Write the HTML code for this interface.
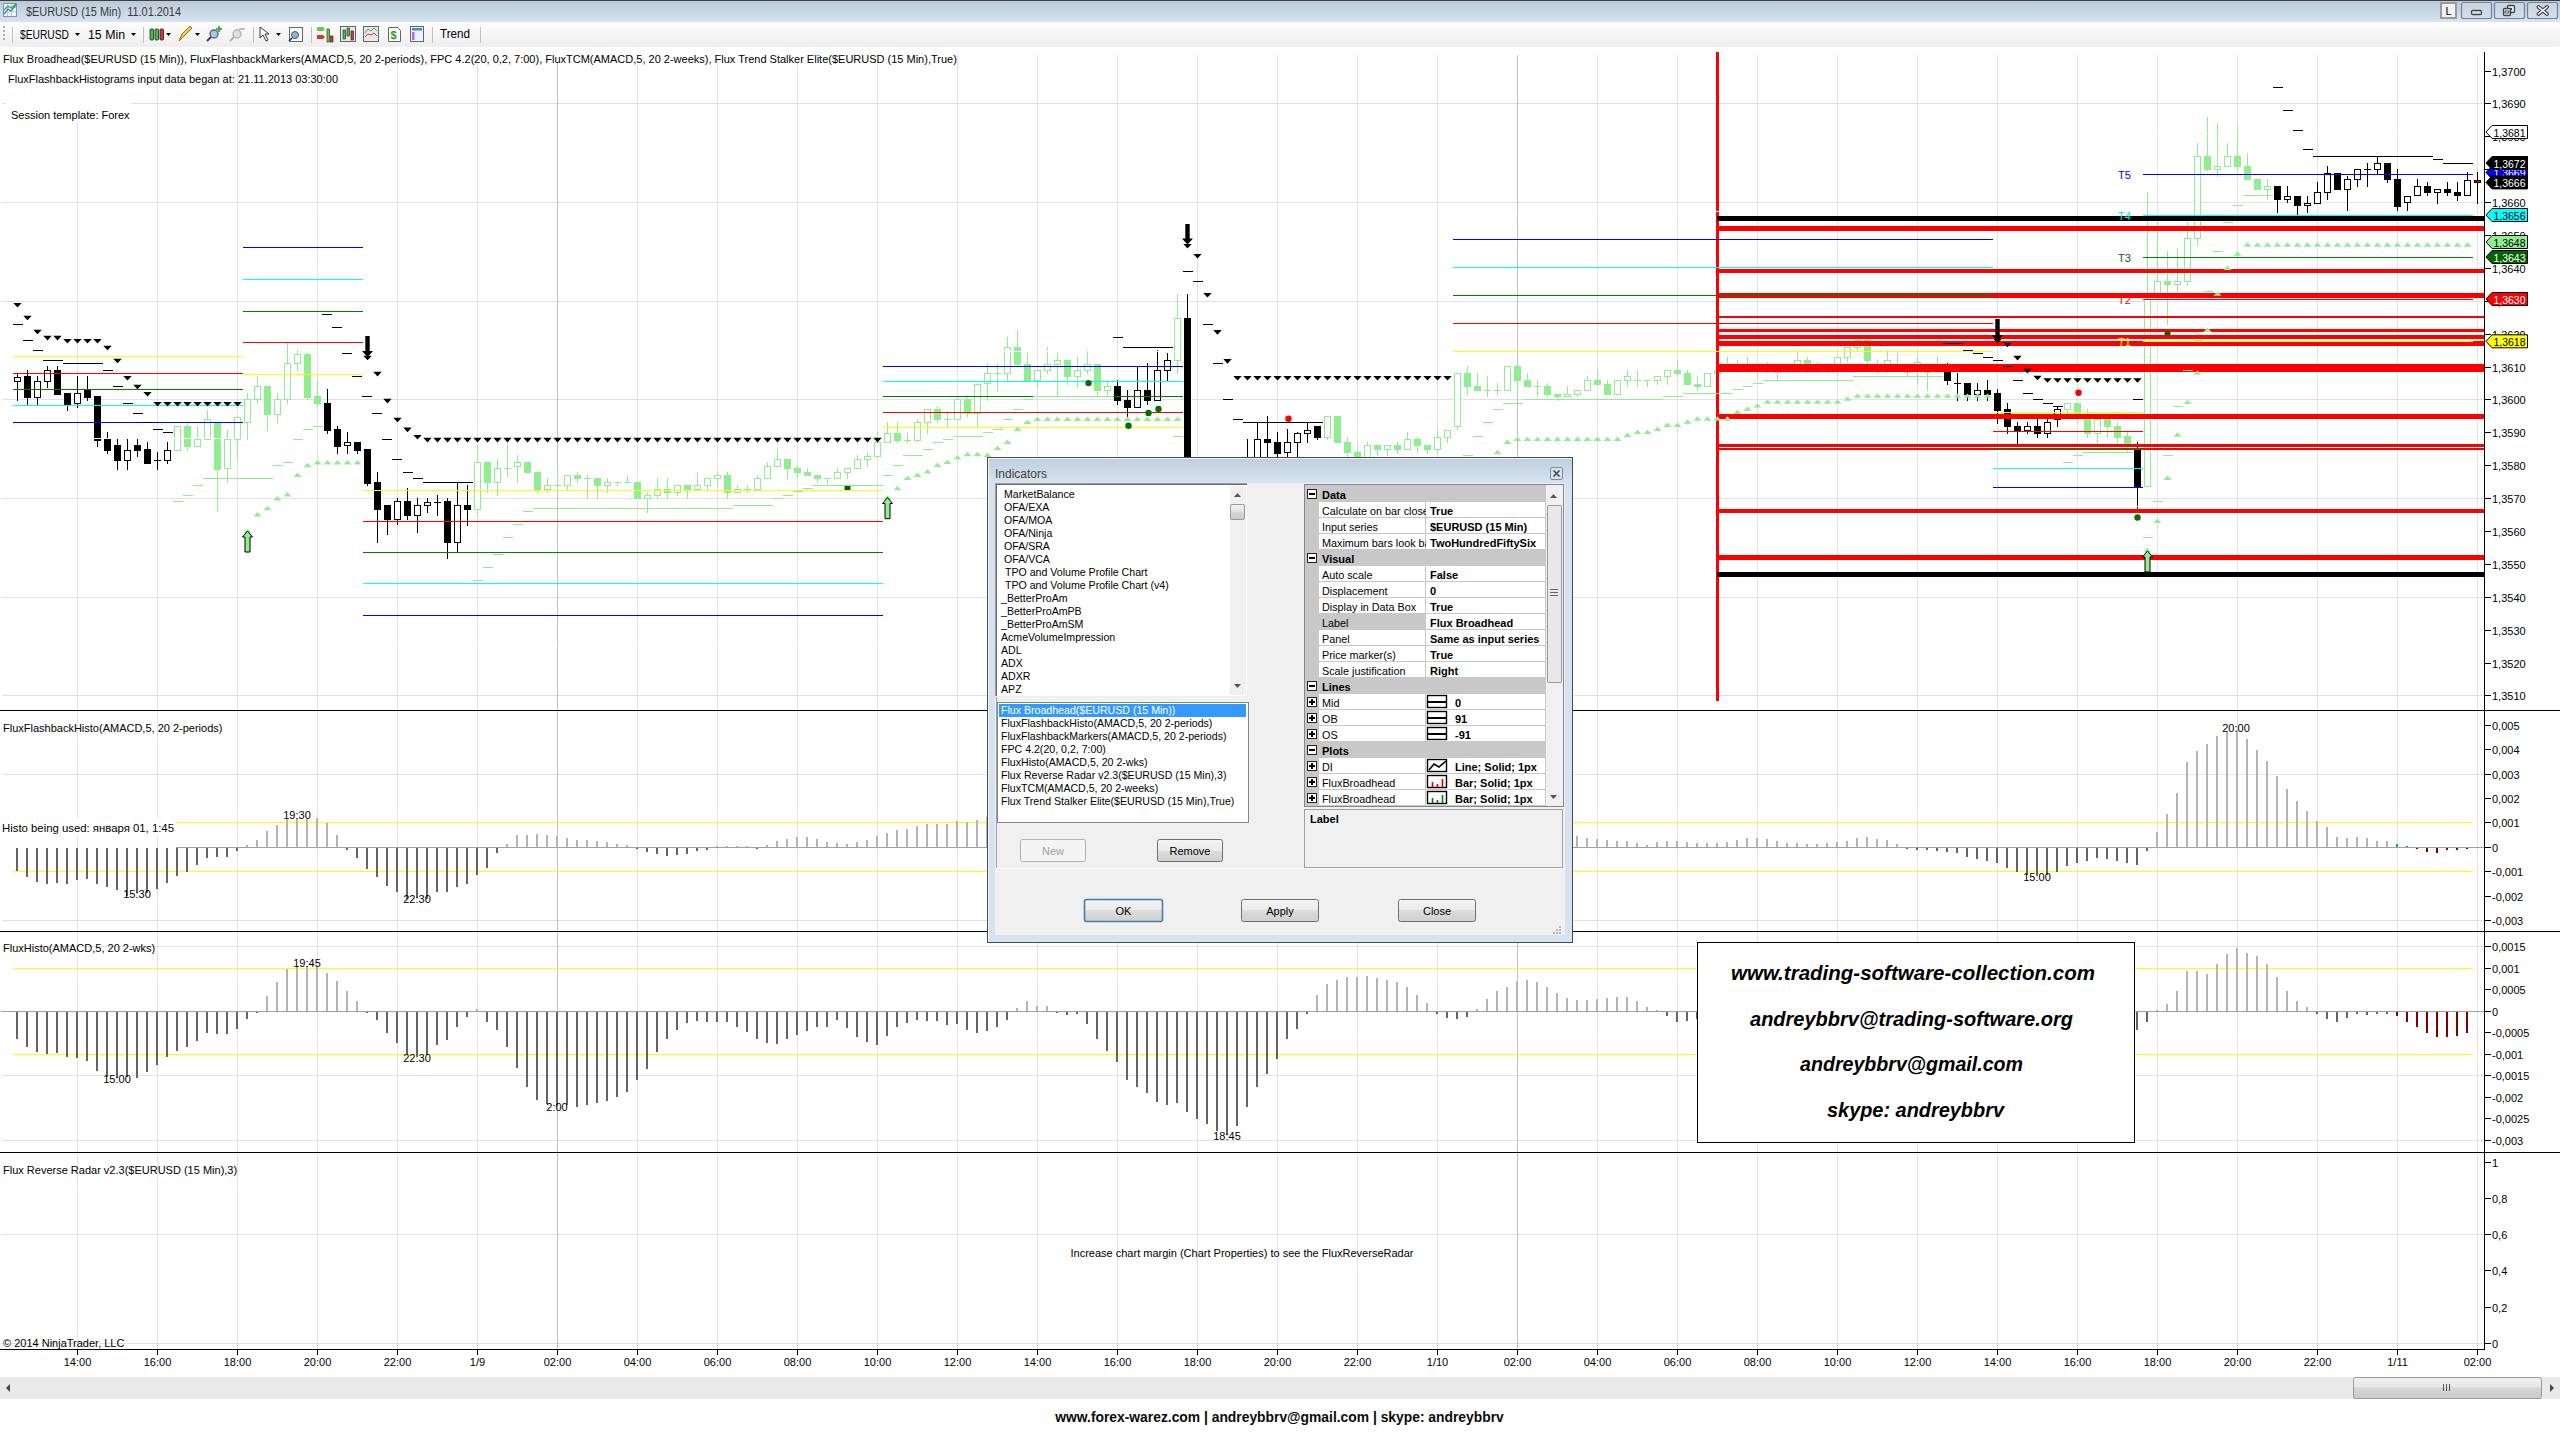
<!DOCTYPE html><html><head><meta charset="utf-8"><title>NinjaTrader chart</title><style>html,body{margin:0;padding:0;background:#fff;width:2560px;height:1434px;overflow:hidden;position:relative}</style></head><body><svg width="2560" height="1434" viewBox="0 0 2560 1434" style="position:absolute;left:0;top:0" font-family="Liberation Sans, sans-serif">
<rect x="0" y="0" width="2560" height="1434" fill="#fff"/>
<g shape-rendering="crispEdges">
<rect x="2" y="103" width="2482" height="1" fill="#e2e2e2"/>
<rect x="2" y="202" width="2482" height="1" fill="#e2e2e2"/>
<rect x="2" y="301" width="2482" height="1" fill="#e2e2e2"/>
<rect x="2" y="399" width="2482" height="1" fill="#e2e2e2"/>
<rect x="2" y="498" width="2482" height="1" fill="#e2e2e2"/>
<rect x="2" y="597" width="2482" height="1" fill="#e2e2e2"/>
<rect x="2" y="695" width="2482" height="1" fill="#e2e2e2"/>
<rect x="2" y="774" width="2482" height="1" fill="#e2e2e2"/>
<rect x="2" y="920" width="2482" height="1" fill="#e2e2e2"/>
<rect x="2" y="946" width="2482" height="1" fill="#e2e2e2"/>
<rect x="2" y="1075" width="2482" height="1" fill="#e2e2e2"/>
<rect x="2" y="1140" width="2482" height="1" fill="#e2e2e2"/>
<rect x="2" y="1234" width="2482" height="1" fill="#e2e2e2"/>
<rect x="2" y="1343" width="2482" height="1" fill="#e2e2e2"/>
<rect x="77" y="55" width="1" height="655" fill="#e2e2e2"/>
<rect x="77" y="711" width="1" height="220" fill="#e2e2e2"/>
<rect x="77" y="932" width="1" height="220" fill="#e2e2e2"/>
<rect x="77" y="1153" width="1" height="196" fill="#e2e2e2"/>
<rect x="157" y="55" width="1" height="655" fill="#e2e2e2"/>
<rect x="157" y="711" width="1" height="220" fill="#e2e2e2"/>
<rect x="157" y="932" width="1" height="220" fill="#e2e2e2"/>
<rect x="157" y="1153" width="1" height="196" fill="#e2e2e2"/>
<rect x="237" y="55" width="1" height="655" fill="#e2e2e2"/>
<rect x="237" y="711" width="1" height="220" fill="#e2e2e2"/>
<rect x="237" y="932" width="1" height="220" fill="#e2e2e2"/>
<rect x="237" y="1153" width="1" height="196" fill="#e2e2e2"/>
<rect x="317" y="55" width="1" height="655" fill="#e2e2e2"/>
<rect x="317" y="711" width="1" height="220" fill="#e2e2e2"/>
<rect x="317" y="932" width="1" height="220" fill="#e2e2e2"/>
<rect x="317" y="1153" width="1" height="196" fill="#e2e2e2"/>
<rect x="397" y="55" width="1" height="655" fill="#e2e2e2"/>
<rect x="397" y="711" width="1" height="220" fill="#e2e2e2"/>
<rect x="397" y="932" width="1" height="220" fill="#e2e2e2"/>
<rect x="397" y="1153" width="1" height="196" fill="#e2e2e2"/>
<rect x="477" y="55" width="1" height="655" fill="#e2e2e2"/>
<rect x="477" y="711" width="1" height="220" fill="#e2e2e2"/>
<rect x="477" y="932" width="1" height="220" fill="#e2e2e2"/>
<rect x="477" y="1153" width="1" height="196" fill="#e2e2e2"/>
<rect x="557" y="55" width="1" height="655" fill="#c0c0c0"/>
<rect x="557" y="711" width="1" height="220" fill="#c0c0c0"/>
<rect x="557" y="932" width="1" height="220" fill="#c0c0c0"/>
<rect x="557" y="1153" width="1" height="196" fill="#c0c0c0"/>
<rect x="637" y="55" width="1" height="655" fill="#e2e2e2"/>
<rect x="637" y="711" width="1" height="220" fill="#e2e2e2"/>
<rect x="637" y="932" width="1" height="220" fill="#e2e2e2"/>
<rect x="637" y="1153" width="1" height="196" fill="#e2e2e2"/>
<rect x="717" y="55" width="1" height="655" fill="#e2e2e2"/>
<rect x="717" y="711" width="1" height="220" fill="#e2e2e2"/>
<rect x="717" y="932" width="1" height="220" fill="#e2e2e2"/>
<rect x="717" y="1153" width="1" height="196" fill="#e2e2e2"/>
<rect x="797" y="55" width="1" height="655" fill="#e2e2e2"/>
<rect x="797" y="711" width="1" height="220" fill="#e2e2e2"/>
<rect x="797" y="932" width="1" height="220" fill="#e2e2e2"/>
<rect x="797" y="1153" width="1" height="196" fill="#e2e2e2"/>
<rect x="877" y="55" width="1" height="655" fill="#e2e2e2"/>
<rect x="877" y="711" width="1" height="220" fill="#e2e2e2"/>
<rect x="877" y="932" width="1" height="220" fill="#e2e2e2"/>
<rect x="877" y="1153" width="1" height="196" fill="#e2e2e2"/>
<rect x="957" y="55" width="1" height="655" fill="#e2e2e2"/>
<rect x="957" y="711" width="1" height="220" fill="#e2e2e2"/>
<rect x="957" y="932" width="1" height="220" fill="#e2e2e2"/>
<rect x="957" y="1153" width="1" height="196" fill="#e2e2e2"/>
<rect x="1037" y="55" width="1" height="655" fill="#e2e2e2"/>
<rect x="1037" y="711" width="1" height="220" fill="#e2e2e2"/>
<rect x="1037" y="932" width="1" height="220" fill="#e2e2e2"/>
<rect x="1037" y="1153" width="1" height="196" fill="#e2e2e2"/>
<rect x="1117" y="55" width="1" height="655" fill="#e2e2e2"/>
<rect x="1117" y="711" width="1" height="220" fill="#e2e2e2"/>
<rect x="1117" y="932" width="1" height="220" fill="#e2e2e2"/>
<rect x="1117" y="1153" width="1" height="196" fill="#e2e2e2"/>
<rect x="1197" y="55" width="1" height="655" fill="#e2e2e2"/>
<rect x="1197" y="711" width="1" height="220" fill="#e2e2e2"/>
<rect x="1197" y="932" width="1" height="220" fill="#e2e2e2"/>
<rect x="1197" y="1153" width="1" height="196" fill="#e2e2e2"/>
<rect x="1277" y="55" width="1" height="655" fill="#e2e2e2"/>
<rect x="1277" y="711" width="1" height="220" fill="#e2e2e2"/>
<rect x="1277" y="932" width="1" height="220" fill="#e2e2e2"/>
<rect x="1277" y="1153" width="1" height="196" fill="#e2e2e2"/>
<rect x="1357" y="55" width="1" height="655" fill="#e2e2e2"/>
<rect x="1357" y="711" width="1" height="220" fill="#e2e2e2"/>
<rect x="1357" y="932" width="1" height="220" fill="#e2e2e2"/>
<rect x="1357" y="1153" width="1" height="196" fill="#e2e2e2"/>
<rect x="1437" y="55" width="1" height="655" fill="#e2e2e2"/>
<rect x="1437" y="711" width="1" height="220" fill="#e2e2e2"/>
<rect x="1437" y="932" width="1" height="220" fill="#e2e2e2"/>
<rect x="1437" y="1153" width="1" height="196" fill="#e2e2e2"/>
<rect x="1517" y="55" width="1" height="655" fill="#c0c0c0"/>
<rect x="1517" y="711" width="1" height="220" fill="#c0c0c0"/>
<rect x="1517" y="932" width="1" height="220" fill="#c0c0c0"/>
<rect x="1517" y="1153" width="1" height="196" fill="#c0c0c0"/>
<rect x="1597" y="55" width="1" height="655" fill="#e2e2e2"/>
<rect x="1597" y="711" width="1" height="220" fill="#e2e2e2"/>
<rect x="1597" y="932" width="1" height="220" fill="#e2e2e2"/>
<rect x="1597" y="1153" width="1" height="196" fill="#e2e2e2"/>
<rect x="1677" y="55" width="1" height="655" fill="#e2e2e2"/>
<rect x="1677" y="711" width="1" height="220" fill="#e2e2e2"/>
<rect x="1677" y="932" width="1" height="220" fill="#e2e2e2"/>
<rect x="1677" y="1153" width="1" height="196" fill="#e2e2e2"/>
<rect x="1757" y="55" width="1" height="655" fill="#e2e2e2"/>
<rect x="1757" y="711" width="1" height="220" fill="#e2e2e2"/>
<rect x="1757" y="932" width="1" height="220" fill="#e2e2e2"/>
<rect x="1757" y="1153" width="1" height="196" fill="#e2e2e2"/>
<rect x="1837" y="55" width="1" height="655" fill="#e2e2e2"/>
<rect x="1837" y="711" width="1" height="220" fill="#e2e2e2"/>
<rect x="1837" y="932" width="1" height="220" fill="#e2e2e2"/>
<rect x="1837" y="1153" width="1" height="196" fill="#e2e2e2"/>
<rect x="1917" y="55" width="1" height="655" fill="#e2e2e2"/>
<rect x="1917" y="711" width="1" height="220" fill="#e2e2e2"/>
<rect x="1917" y="932" width="1" height="220" fill="#e2e2e2"/>
<rect x="1917" y="1153" width="1" height="196" fill="#e2e2e2"/>
<rect x="1997" y="55" width="1" height="655" fill="#e2e2e2"/>
<rect x="1997" y="711" width="1" height="220" fill="#e2e2e2"/>
<rect x="1997" y="932" width="1" height="220" fill="#e2e2e2"/>
<rect x="1997" y="1153" width="1" height="196" fill="#e2e2e2"/>
<rect x="2077" y="55" width="1" height="655" fill="#e2e2e2"/>
<rect x="2077" y="711" width="1" height="220" fill="#e2e2e2"/>
<rect x="2077" y="932" width="1" height="220" fill="#e2e2e2"/>
<rect x="2077" y="1153" width="1" height="196" fill="#e2e2e2"/>
<rect x="2157" y="55" width="1" height="655" fill="#e2e2e2"/>
<rect x="2157" y="711" width="1" height="220" fill="#e2e2e2"/>
<rect x="2157" y="932" width="1" height="220" fill="#e2e2e2"/>
<rect x="2157" y="1153" width="1" height="196" fill="#e2e2e2"/>
<rect x="2237" y="55" width="1" height="655" fill="#e2e2e2"/>
<rect x="2237" y="711" width="1" height="220" fill="#e2e2e2"/>
<rect x="2237" y="932" width="1" height="220" fill="#e2e2e2"/>
<rect x="2237" y="1153" width="1" height="196" fill="#e2e2e2"/>
<rect x="2317" y="55" width="1" height="655" fill="#e2e2e2"/>
<rect x="2317" y="711" width="1" height="220" fill="#e2e2e2"/>
<rect x="2317" y="932" width="1" height="220" fill="#e2e2e2"/>
<rect x="2317" y="1153" width="1" height="196" fill="#e2e2e2"/>
<rect x="2397" y="55" width="1" height="655" fill="#e2e2e2"/>
<rect x="2397" y="711" width="1" height="220" fill="#e2e2e2"/>
<rect x="2397" y="932" width="1" height="220" fill="#e2e2e2"/>
<rect x="2397" y="1153" width="1" height="196" fill="#e2e2e2"/>
<rect x="2477" y="55" width="1" height="655" fill="#e2e2e2"/>
<rect x="2477" y="711" width="1" height="220" fill="#e2e2e2"/>
<rect x="2477" y="932" width="1" height="220" fill="#e2e2e2"/>
<rect x="2477" y="1153" width="1" height="196" fill="#e2e2e2"/>
</g>
<g shape-rendering="crispEdges">
<rect x="175" y="822" width="2298" height="1" fill="#ffff00"/>
<rect x="13" y="871" width="2460" height="1" fill="#ffff00"/>
<rect x="13" y="968" width="2460" height="1" fill="#ffff00"/>
<rect x="13" y="1054" width="2460" height="1" fill="#ffff00"/>
<rect x="176" y="847" width="2308" height="1" fill="#a0a0a0"/>
<rect x="1" y="1011" width="2483" height="1" fill="#a0a0a0"/>
<rect x="16" y="848" width="2" height="23" fill="#646464"/>
<rect x="26" y="848" width="2" height="29" fill="#646464"/>
<rect x="36" y="848" width="2" height="34" fill="#646464"/>
<rect x="46" y="848" width="2" height="36" fill="#646464"/>
<rect x="56" y="848" width="2" height="35" fill="#646464"/>
<rect x="66" y="848" width="2" height="36" fill="#646464"/>
<rect x="76" y="848" width="2" height="32" fill="#646464"/>
<rect x="86" y="848" width="2" height="31" fill="#646464"/>
<rect x="96" y="848" width="2" height="36" fill="#646464"/>
<rect x="106" y="848" width="2" height="39" fill="#646464"/>
<rect x="116" y="848" width="2" height="42" fill="#646464"/>
<rect x="126" y="848" width="2" height="48" fill="#646464"/>
<rect x="136" y="848" width="2" height="45" fill="#646464"/>
<rect x="146" y="848" width="2" height="45" fill="#646464"/>
<rect x="156" y="848" width="2" height="41" fill="#646464"/>
<rect x="166" y="848" width="2" height="35" fill="#646464"/>
<rect x="176" y="848" width="2" height="28" fill="#646464"/>
<rect x="186" y="848" width="2" height="24" fill="#646464"/>
<rect x="196" y="848" width="2" height="17" fill="#646464"/>
<rect x="206" y="848" width="2" height="10" fill="#646464"/>
<rect x="216" y="848" width="2" height="9" fill="#646464"/>
<rect x="226" y="848" width="2" height="9" fill="#646464"/>
<rect x="236" y="848" width="2" height="3" fill="#646464"/>
<rect x="246" y="845" width="2" height="2" fill="#b4b4b4"/>
<rect x="256" y="840" width="2" height="7" fill="#b4b4b4"/>
<rect x="266" y="831" width="2" height="16" fill="#b4b4b4"/>
<rect x="276" y="825" width="2" height="22" fill="#b4b4b4"/>
<rect x="286" y="819" width="2" height="28" fill="#b4b4b4"/>
<rect x="296" y="818" width="2" height="29" fill="#b4b4b4"/>
<rect x="306" y="819" width="2" height="28" fill="#b4b4b4"/>
<rect x="316" y="818" width="2" height="29" fill="#b4b4b4"/>
<rect x="326" y="823" width="2" height="24" fill="#b4b4b4"/>
<rect x="336" y="835" width="2" height="12" fill="#b4b4b4"/>
<rect x="346" y="848" width="2" height="2" fill="#646464"/>
<rect x="356" y="848" width="2" height="10" fill="#646464"/>
<rect x="366" y="848" width="2" height="21" fill="#646464"/>
<rect x="376" y="848" width="2" height="29" fill="#646464"/>
<rect x="386" y="848" width="2" height="38" fill="#646464"/>
<rect x="396" y="848" width="2" height="44" fill="#646464"/>
<rect x="406" y="848" width="2" height="51" fill="#646464"/>
<rect x="416" y="848" width="2" height="50" fill="#646464"/>
<rect x="426" y="848" width="2" height="51" fill="#646464"/>
<rect x="436" y="848" width="2" height="44" fill="#646464"/>
<rect x="446" y="848" width="2" height="44" fill="#646464"/>
<rect x="456" y="848" width="2" height="39" fill="#646464"/>
<rect x="466" y="848" width="2" height="36" fill="#646464"/>
<rect x="476" y="848" width="2" height="27" fill="#646464"/>
<rect x="486" y="848" width="2" height="20" fill="#646464"/>
<rect x="496" y="848" width="2" height="5" fill="#646464"/>
<rect x="506" y="844" width="2" height="3" fill="#b4b4b4"/>
<rect x="516" y="835" width="2" height="12" fill="#b4b4b4"/>
<rect x="526" y="835" width="2" height="12" fill="#b4b4b4"/>
<rect x="536" y="834" width="2" height="13" fill="#b4b4b4"/>
<rect x="546" y="835" width="2" height="12" fill="#b4b4b4"/>
<rect x="556" y="836" width="2" height="11" fill="#b4b4b4"/>
<rect x="566" y="838" width="2" height="9" fill="#b4b4b4"/>
<rect x="576" y="840" width="2" height="7" fill="#b4b4b4"/>
<rect x="586" y="840" width="2" height="7" fill="#b4b4b4"/>
<rect x="596" y="841" width="2" height="6" fill="#b4b4b4"/>
<rect x="606" y="842" width="2" height="5" fill="#b4b4b4"/>
<rect x="616" y="844" width="2" height="3" fill="#b4b4b4"/>
<rect x="626" y="845" width="2" height="2" fill="#b4b4b4"/>
<rect x="636" y="848" width="2" height="1" fill="#646464"/>
<rect x="646" y="848" width="2" height="4" fill="#646464"/>
<rect x="656" y="848" width="2" height="6" fill="#646464"/>
<rect x="666" y="848" width="2" height="8" fill="#646464"/>
<rect x="676" y="848" width="2" height="7" fill="#646464"/>
<rect x="686" y="848" width="2" height="6" fill="#646464"/>
<rect x="696" y="848" width="2" height="3" fill="#646464"/>
<rect x="706" y="848" width="2" height="2" fill="#646464"/>
<rect x="716" y="846" width="2" height="1" fill="#b4b4b4"/>
<rect x="726" y="846" width="2" height="1" fill="#b4b4b4"/>
<rect x="736" y="846" width="2" height="1" fill="#b4b4b4"/>
<rect x="746" y="846" width="2" height="1" fill="#b4b4b4"/>
<rect x="756" y="848" width="2" height="1" fill="#646464"/>
<rect x="766" y="845" width="2" height="2" fill="#b4b4b4"/>
<rect x="776" y="841" width="2" height="6" fill="#b4b4b4"/>
<rect x="786" y="839" width="2" height="8" fill="#b4b4b4"/>
<rect x="796" y="837" width="2" height="10" fill="#b4b4b4"/>
<rect x="806" y="837" width="2" height="10" fill="#b4b4b4"/>
<rect x="816" y="839" width="2" height="8" fill="#b4b4b4"/>
<rect x="826" y="842" width="2" height="5" fill="#b4b4b4"/>
<rect x="836" y="843" width="2" height="4" fill="#b4b4b4"/>
<rect x="846" y="844" width="2" height="3" fill="#b4b4b4"/>
<rect x="856" y="842" width="2" height="5" fill="#b4b4b4"/>
<rect x="866" y="840" width="2" height="7" fill="#b4b4b4"/>
<rect x="876" y="836" width="2" height="11" fill="#b4b4b4"/>
<rect x="886" y="833" width="2" height="14" fill="#b4b4b4"/>
<rect x="896" y="830" width="2" height="17" fill="#b4b4b4"/>
<rect x="906" y="829" width="2" height="18" fill="#b4b4b4"/>
<rect x="916" y="826" width="2" height="21" fill="#b4b4b4"/>
<rect x="926" y="824" width="2" height="23" fill="#b4b4b4"/>
<rect x="936" y="824" width="2" height="23" fill="#b4b4b4"/>
<rect x="946" y="824" width="2" height="23" fill="#b4b4b4"/>
<rect x="956" y="821" width="2" height="26" fill="#b4b4b4"/>
<rect x="966" y="822" width="2" height="25" fill="#b4b4b4"/>
<rect x="976" y="820" width="2" height="27" fill="#b4b4b4"/>
<rect x="986" y="817" width="2" height="30" fill="#b4b4b4"/>
<rect x="1576" y="836" width="2" height="11" fill="#b4b4b4"/>
<rect x="1586" y="838" width="2" height="9" fill="#b4b4b4"/>
<rect x="1596" y="839" width="2" height="8" fill="#b4b4b4"/>
<rect x="1606" y="840" width="2" height="7" fill="#b4b4b4"/>
<rect x="1616" y="841" width="2" height="6" fill="#b4b4b4"/>
<rect x="1626" y="841" width="2" height="6" fill="#b4b4b4"/>
<rect x="1636" y="843" width="2" height="4" fill="#b4b4b4"/>
<rect x="1646" y="845" width="2" height="2" fill="#b4b4b4"/>
<rect x="1656" y="842" width="2" height="5" fill="#b4b4b4"/>
<rect x="1666" y="841" width="2" height="6" fill="#b4b4b4"/>
<rect x="1676" y="841" width="2" height="6" fill="#b4b4b4"/>
<rect x="1686" y="842" width="2" height="5" fill="#b4b4b4"/>
<rect x="1696" y="843" width="2" height="4" fill="#b4b4b4"/>
<rect x="1706" y="843" width="2" height="4" fill="#b4b4b4"/>
<rect x="1716" y="843" width="2" height="4" fill="#b4b4b4"/>
<rect x="1726" y="842" width="2" height="5" fill="#b4b4b4"/>
<rect x="1736" y="840" width="2" height="7" fill="#b4b4b4"/>
<rect x="1746" y="838" width="2" height="9" fill="#b4b4b4"/>
<rect x="1756" y="838" width="2" height="9" fill="#b4b4b4"/>
<rect x="1766" y="839" width="2" height="8" fill="#b4b4b4"/>
<rect x="1776" y="841" width="2" height="6" fill="#b4b4b4"/>
<rect x="1786" y="843" width="2" height="4" fill="#b4b4b4"/>
<rect x="1796" y="843" width="2" height="4" fill="#b4b4b4"/>
<rect x="1806" y="844" width="2" height="3" fill="#b4b4b4"/>
<rect x="1816" y="844" width="2" height="3" fill="#b4b4b4"/>
<rect x="1826" y="843" width="2" height="4" fill="#b4b4b4"/>
<rect x="1836" y="842" width="2" height="5" fill="#b4b4b4"/>
<rect x="1846" y="841" width="2" height="6" fill="#b4b4b4"/>
<rect x="1856" y="838" width="2" height="9" fill="#b4b4b4"/>
<rect x="1866" y="837" width="2" height="10" fill="#b4b4b4"/>
<rect x="1876" y="839" width="2" height="8" fill="#b4b4b4"/>
<rect x="1886" y="840" width="2" height="7" fill="#b4b4b4"/>
<rect x="1896" y="844" width="2" height="3" fill="#b4b4b4"/>
<rect x="1906" y="848" width="2" height="1" fill="#646464"/>
<rect x="1916" y="848" width="2" height="2" fill="#646464"/>
<rect x="1926" y="848" width="2" height="2" fill="#646464"/>
<rect x="1936" y="848" width="2" height="3" fill="#646464"/>
<rect x="1946" y="848" width="2" height="4" fill="#646464"/>
<rect x="1956" y="848" width="2" height="5" fill="#646464"/>
<rect x="1966" y="848" width="2" height="9" fill="#646464"/>
<rect x="1976" y="848" width="2" height="11" fill="#646464"/>
<rect x="1986" y="848" width="2" height="13" fill="#646464"/>
<rect x="1996" y="848" width="2" height="15" fill="#646464"/>
<rect x="2006" y="848" width="2" height="20" fill="#646464"/>
<rect x="2016" y="848" width="2" height="24" fill="#646464"/>
<rect x="2026" y="848" width="2" height="27" fill="#646464"/>
<rect x="2036" y="848" width="2" height="27" fill="#646464"/>
<rect x="2046" y="848" width="2" height="27" fill="#646464"/>
<rect x="2056" y="848" width="2" height="24" fill="#646464"/>
<rect x="2066" y="848" width="2" height="18" fill="#646464"/>
<rect x="2076" y="848" width="2" height="15" fill="#646464"/>
<rect x="2086" y="848" width="2" height="13" fill="#646464"/>
<rect x="2096" y="848" width="2" height="10" fill="#646464"/>
<rect x="2106" y="848" width="2" height="11" fill="#646464"/>
<rect x="2116" y="848" width="2" height="13" fill="#646464"/>
<rect x="2126" y="848" width="2" height="15" fill="#646464"/>
<rect x="2136" y="848" width="2" height="17" fill="#646464"/>
<rect x="2146" y="848" width="2" height="3" fill="#646464"/>
<rect x="2156" y="832" width="2" height="15" fill="#b4b4b4"/>
<rect x="2166" y="814" width="2" height="33" fill="#b4b4b4"/>
<rect x="2176" y="793" width="2" height="54" fill="#b4b4b4"/>
<rect x="2186" y="762" width="2" height="85" fill="#b4b4b4"/>
<rect x="2196" y="751" width="2" height="96" fill="#b4b4b4"/>
<rect x="2206" y="744" width="2" height="103" fill="#b4b4b4"/>
<rect x="2216" y="736" width="2" height="111" fill="#b4b4b4"/>
<rect x="2226" y="732" width="2" height="115" fill="#b4b4b4"/>
<rect x="2236" y="730" width="2" height="117" fill="#b4b4b4"/>
<rect x="2246" y="739" width="2" height="108" fill="#b4b4b4"/>
<rect x="2256" y="750" width="2" height="97" fill="#b4b4b4"/>
<rect x="2266" y="761" width="2" height="86" fill="#b4b4b4"/>
<rect x="2276" y="776" width="2" height="71" fill="#b4b4b4"/>
<rect x="2286" y="789" width="2" height="58" fill="#b4b4b4"/>
<rect x="2296" y="801" width="2" height="46" fill="#b4b4b4"/>
<rect x="2306" y="811" width="2" height="36" fill="#b4b4b4"/>
<rect x="2316" y="821" width="2" height="26" fill="#b4b4b4"/>
<rect x="2326" y="827" width="2" height="20" fill="#b4b4b4"/>
<rect x="2336" y="837" width="2" height="10" fill="#b4b4b4"/>
<rect x="2346" y="838" width="2" height="9" fill="#b4b4b4"/>
<rect x="2356" y="837" width="2" height="10" fill="#b4b4b4"/>
<rect x="2366" y="838" width="2" height="9" fill="#b4b4b4"/>
<rect x="2376" y="841" width="2" height="6" fill="#b4b4b4"/>
<rect x="2386" y="841" width="2" height="6" fill="#b4b4b4"/>
<rect x="2396" y="844" width="2" height="3" fill="#00b050"/>
<rect x="2406" y="846" width="2" height="1" fill="#00b050"/>
<rect x="2416" y="848" width="2" height="1" fill="#800000"/>
<rect x="2426" y="848" width="2" height="4" fill="#800000"/>
<rect x="2436" y="848" width="2" height="5" fill="#800000"/>
<rect x="2446" y="848" width="2" height="2" fill="#800000"/>
<rect x="2456" y="848" width="2" height="2" fill="#800000"/>
<rect x="2466" y="848" width="2" height="1" fill="#800000"/>
<rect x="16" y="1012" width="2" height="27" fill="#646464"/>
<rect x="26" y="1012" width="2" height="35" fill="#646464"/>
<rect x="36" y="1012" width="2" height="40" fill="#646464"/>
<rect x="46" y="1012" width="2" height="42" fill="#646464"/>
<rect x="56" y="1012" width="2" height="41" fill="#646464"/>
<rect x="66" y="1012" width="2" height="45" fill="#646464"/>
<rect x="76" y="1012" width="2" height="46" fill="#646464"/>
<rect x="86" y="1012" width="2" height="49" fill="#646464"/>
<rect x="96" y="1012" width="2" height="59" fill="#646464"/>
<rect x="106" y="1012" width="2" height="65" fill="#646464"/>
<rect x="116" y="1012" width="2" height="66" fill="#646464"/>
<rect x="126" y="1012" width="2" height="65" fill="#646464"/>
<rect x="136" y="1012" width="2" height="66" fill="#646464"/>
<rect x="146" y="1012" width="2" height="60" fill="#646464"/>
<rect x="156" y="1012" width="2" height="53" fill="#646464"/>
<rect x="166" y="1012" width="2" height="45" fill="#646464"/>
<rect x="176" y="1012" width="2" height="39" fill="#646464"/>
<rect x="186" y="1012" width="2" height="35" fill="#646464"/>
<rect x="196" y="1012" width="2" height="29" fill="#646464"/>
<rect x="206" y="1012" width="2" height="21" fill="#646464"/>
<rect x="216" y="1012" width="2" height="22" fill="#646464"/>
<rect x="226" y="1012" width="2" height="22" fill="#646464"/>
<rect x="236" y="1012" width="2" height="17" fill="#646464"/>
<rect x="246" y="1012" width="2" height="7" fill="#646464"/>
<rect x="256" y="1012" width="2" height="1" fill="#646464"/>
<rect x="266" y="996" width="2" height="15" fill="#b4b4b4"/>
<rect x="276" y="982" width="2" height="29" fill="#b4b4b4"/>
<rect x="286" y="969" width="2" height="42" fill="#b4b4b4"/>
<rect x="296" y="966" width="2" height="45" fill="#b4b4b4"/>
<rect x="306" y="966" width="2" height="45" fill="#b4b4b4"/>
<rect x="316" y="967" width="2" height="44" fill="#b4b4b4"/>
<rect x="326" y="973" width="2" height="38" fill="#b4b4b4"/>
<rect x="336" y="981" width="2" height="30" fill="#b4b4b4"/>
<rect x="346" y="991" width="2" height="20" fill="#b4b4b4"/>
<rect x="356" y="1001" width="2" height="10" fill="#b4b4b4"/>
<rect x="366" y="1012" width="2" height="1" fill="#646464"/>
<rect x="376" y="1012" width="2" height="8" fill="#646464"/>
<rect x="386" y="1012" width="2" height="21" fill="#646464"/>
<rect x="396" y="1012" width="2" height="31" fill="#646464"/>
<rect x="406" y="1012" width="2" height="42" fill="#646464"/>
<rect x="416" y="1012" width="2" height="44" fill="#646464"/>
<rect x="426" y="1012" width="2" height="43" fill="#646464"/>
<rect x="436" y="1012" width="2" height="33" fill="#646464"/>
<rect x="446" y="1012" width="2" height="28" fill="#646464"/>
<rect x="456" y="1012" width="2" height="15" fill="#646464"/>
<rect x="466" y="1012" width="2" height="5" fill="#646464"/>
<rect x="476" y="1009" width="2" height="2" fill="#b4b4b4"/>
<rect x="486" y="1012" width="2" height="10" fill="#646464"/>
<rect x="496" y="1012" width="2" height="18" fill="#646464"/>
<rect x="506" y="1012" width="2" height="35" fill="#646464"/>
<rect x="516" y="1012" width="2" height="56" fill="#646464"/>
<rect x="526" y="1012" width="2" height="75" fill="#646464"/>
<rect x="536" y="1012" width="2" height="88" fill="#646464"/>
<rect x="546" y="1012" width="2" height="92" fill="#646464"/>
<rect x="556" y="1012" width="2" height="94" fill="#646464"/>
<rect x="566" y="1012" width="2" height="93" fill="#646464"/>
<rect x="576" y="1012" width="2" height="95" fill="#646464"/>
<rect x="586" y="1012" width="2" height="93" fill="#646464"/>
<rect x="596" y="1012" width="2" height="91" fill="#646464"/>
<rect x="606" y="1012" width="2" height="89" fill="#646464"/>
<rect x="616" y="1012" width="2" height="85" fill="#646464"/>
<rect x="626" y="1012" width="2" height="80" fill="#646464"/>
<rect x="636" y="1012" width="2" height="68" fill="#646464"/>
<rect x="646" y="1012" width="2" height="57" fill="#646464"/>
<rect x="656" y="1012" width="2" height="40" fill="#646464"/>
<rect x="666" y="1012" width="2" height="27" fill="#646464"/>
<rect x="676" y="1012" width="2" height="18" fill="#646464"/>
<rect x="686" y="1012" width="2" height="11" fill="#646464"/>
<rect x="696" y="1012" width="2" height="9" fill="#646464"/>
<rect x="706" y="1012" width="2" height="10" fill="#646464"/>
<rect x="716" y="1012" width="2" height="10" fill="#646464"/>
<rect x="726" y="1012" width="2" height="10" fill="#646464"/>
<rect x="736" y="1012" width="2" height="15" fill="#646464"/>
<rect x="746" y="1012" width="2" height="20" fill="#646464"/>
<rect x="756" y="1012" width="2" height="27" fill="#646464"/>
<rect x="766" y="1012" width="2" height="31" fill="#646464"/>
<rect x="776" y="1012" width="2" height="32" fill="#646464"/>
<rect x="786" y="1012" width="2" height="27" fill="#646464"/>
<rect x="796" y="1012" width="2" height="23" fill="#646464"/>
<rect x="806" y="1012" width="2" height="19" fill="#646464"/>
<rect x="816" y="1012" width="2" height="15" fill="#646464"/>
<rect x="826" y="1012" width="2" height="15" fill="#646464"/>
<rect x="836" y="1012" width="2" height="8" fill="#646464"/>
<rect x="846" y="1012" width="2" height="16" fill="#646464"/>
<rect x="856" y="1012" width="2" height="25" fill="#646464"/>
<rect x="866" y="1012" width="2" height="30" fill="#646464"/>
<rect x="876" y="1012" width="2" height="33" fill="#646464"/>
<rect x="886" y="1012" width="2" height="24" fill="#646464"/>
<rect x="896" y="1012" width="2" height="15" fill="#646464"/>
<rect x="906" y="1012" width="2" height="11" fill="#646464"/>
<rect x="916" y="1012" width="2" height="8" fill="#646464"/>
<rect x="926" y="1012" width="2" height="9" fill="#646464"/>
<rect x="936" y="1012" width="2" height="9" fill="#646464"/>
<rect x="946" y="1012" width="2" height="13" fill="#646464"/>
<rect x="956" y="1012" width="2" height="12" fill="#646464"/>
<rect x="966" y="1012" width="2" height="18" fill="#646464"/>
<rect x="976" y="1012" width="2" height="21" fill="#646464"/>
<rect x="986" y="1012" width="2" height="19" fill="#646464"/>
<rect x="996" y="1012" width="2" height="15" fill="#646464"/>
<rect x="1006" y="1012" width="2" height="8" fill="#646464"/>
<rect x="1016" y="1008" width="2" height="3" fill="#b4b4b4"/>
<rect x="1026" y="1001" width="2" height="10" fill="#b4b4b4"/>
<rect x="1036" y="1006" width="2" height="5" fill="#b4b4b4"/>
<rect x="1046" y="1006" width="2" height="5" fill="#b4b4b4"/>
<rect x="1056" y="1012" width="2" height="1" fill="#646464"/>
<rect x="1066" y="1012" width="2" height="3" fill="#646464"/>
<rect x="1076" y="1012" width="2" height="2" fill="#646464"/>
<rect x="1086" y="1012" width="2" height="12" fill="#646464"/>
<rect x="1096" y="1012" width="2" height="27" fill="#646464"/>
<rect x="1106" y="1012" width="2" height="39" fill="#646464"/>
<rect x="1116" y="1012" width="2" height="50" fill="#646464"/>
<rect x="1126" y="1012" width="2" height="68" fill="#646464"/>
<rect x="1136" y="1012" width="2" height="75" fill="#646464"/>
<rect x="1146" y="1012" width="2" height="81" fill="#646464"/>
<rect x="1156" y="1012" width="2" height="90" fill="#646464"/>
<rect x="1166" y="1012" width="2" height="93" fill="#646464"/>
<rect x="1176" y="1012" width="2" height="91" fill="#646464"/>
<rect x="1186" y="1012" width="2" height="100" fill="#646464"/>
<rect x="1196" y="1012" width="2" height="107" fill="#646464"/>
<rect x="1206" y="1012" width="2" height="112" fill="#646464"/>
<rect x="1216" y="1012" width="2" height="119" fill="#646464"/>
<rect x="1226" y="1012" width="2" height="123" fill="#646464"/>
<rect x="1236" y="1012" width="2" height="114" fill="#646464"/>
<rect x="1246" y="1012" width="2" height="95" fill="#646464"/>
<rect x="1256" y="1012" width="2" height="75" fill="#646464"/>
<rect x="1266" y="1012" width="2" height="62" fill="#646464"/>
<rect x="1276" y="1012" width="2" height="47" fill="#646464"/>
<rect x="1286" y="1012" width="2" height="27" fill="#646464"/>
<rect x="1296" y="1012" width="2" height="17" fill="#646464"/>
<rect x="1306" y="1012" width="2" height="2" fill="#646464"/>
<rect x="1316" y="995" width="2" height="16" fill="#b4b4b4"/>
<rect x="1326" y="984" width="2" height="27" fill="#b4b4b4"/>
<rect x="1336" y="980" width="2" height="31" fill="#b4b4b4"/>
<rect x="1346" y="977" width="2" height="34" fill="#b4b4b4"/>
<rect x="1356" y="977" width="2" height="34" fill="#b4b4b4"/>
<rect x="1366" y="976" width="2" height="35" fill="#b4b4b4"/>
<rect x="1376" y="978" width="2" height="33" fill="#b4b4b4"/>
<rect x="1386" y="980" width="2" height="31" fill="#b4b4b4"/>
<rect x="1396" y="982" width="2" height="29" fill="#b4b4b4"/>
<rect x="1406" y="987" width="2" height="24" fill="#b4b4b4"/>
<rect x="1416" y="995" width="2" height="16" fill="#b4b4b4"/>
<rect x="1426" y="1003" width="2" height="8" fill="#b4b4b4"/>
<rect x="1436" y="1012" width="2" height="2" fill="#646464"/>
<rect x="1446" y="1012" width="2" height="6" fill="#646464"/>
<rect x="1456" y="1012" width="2" height="7" fill="#646464"/>
<rect x="1466" y="1012" width="2" height="5" fill="#646464"/>
<rect x="1476" y="1009" width="2" height="2" fill="#b4b4b4"/>
<rect x="1486" y="999" width="2" height="12" fill="#b4b4b4"/>
<rect x="1496" y="991" width="2" height="20" fill="#b4b4b4"/>
<rect x="1506" y="987" width="2" height="24" fill="#b4b4b4"/>
<rect x="1516" y="981" width="2" height="30" fill="#b4b4b4"/>
<rect x="1526" y="980" width="2" height="31" fill="#b4b4b4"/>
<rect x="1536" y="982" width="2" height="29" fill="#b4b4b4"/>
<rect x="1546" y="987" width="2" height="24" fill="#b4b4b4"/>
<rect x="1556" y="993" width="2" height="18" fill="#b4b4b4"/>
<rect x="1566" y="998" width="2" height="13" fill="#b4b4b4"/>
<rect x="1576" y="1000" width="2" height="11" fill="#b4b4b4"/>
<rect x="1586" y="1000" width="2" height="11" fill="#b4b4b4"/>
<rect x="1596" y="999" width="2" height="12" fill="#b4b4b4"/>
<rect x="1606" y="998" width="2" height="13" fill="#b4b4b4"/>
<rect x="1616" y="997" width="2" height="14" fill="#b4b4b4"/>
<rect x="1626" y="997" width="2" height="14" fill="#b4b4b4"/>
<rect x="1636" y="1001" width="2" height="10" fill="#b4b4b4"/>
<rect x="1646" y="1007" width="2" height="4" fill="#b4b4b4"/>
<rect x="1656" y="1010" width="2" height="1" fill="#b4b4b4"/>
<rect x="1666" y="1012" width="2" height="4" fill="#646464"/>
<rect x="1676" y="1012" width="2" height="10" fill="#646464"/>
<rect x="1686" y="1012" width="2" height="9" fill="#646464"/>
<rect x="1696" y="1012" width="2" height="7" fill="#646464"/>
<rect x="2136" y="1012" width="2" height="18" fill="#646464"/>
<rect x="2146" y="1012" width="2" height="10" fill="#646464"/>
<rect x="2156" y="1010" width="2" height="1" fill="#b4b4b4"/>
<rect x="2166" y="1004" width="2" height="7" fill="#b4b4b4"/>
<rect x="2176" y="991" width="2" height="20" fill="#b4b4b4"/>
<rect x="2186" y="971" width="2" height="40" fill="#b4b4b4"/>
<rect x="2196" y="971" width="2" height="40" fill="#b4b4b4"/>
<rect x="2206" y="974" width="2" height="37" fill="#b4b4b4"/>
<rect x="2216" y="964" width="2" height="47" fill="#b4b4b4"/>
<rect x="2226" y="954" width="2" height="57" fill="#b4b4b4"/>
<rect x="2236" y="948" width="2" height="63" fill="#b4b4b4"/>
<rect x="2246" y="953" width="2" height="58" fill="#b4b4b4"/>
<rect x="2256" y="956" width="2" height="55" fill="#b4b4b4"/>
<rect x="2266" y="964" width="2" height="47" fill="#b4b4b4"/>
<rect x="2276" y="977" width="2" height="34" fill="#b4b4b4"/>
<rect x="2286" y="991" width="2" height="20" fill="#b4b4b4"/>
<rect x="2296" y="1001" width="2" height="10" fill="#b4b4b4"/>
<rect x="2306" y="1007" width="2" height="4" fill="#b4b4b4"/>
<rect x="2316" y="1012" width="2" height="2" fill="#646464"/>
<rect x="2326" y="1012" width="2" height="7" fill="#646464"/>
<rect x="2336" y="1012" width="2" height="10" fill="#646464"/>
<rect x="2346" y="1012" width="2" height="6" fill="#646464"/>
<rect x="2356" y="1012" width="2" height="2" fill="#646464"/>
<rect x="2366" y="1012" width="2" height="3" fill="#646464"/>
<rect x="2376" y="1012" width="2" height="2" fill="#646464"/>
<rect x="2386" y="1012" width="2" height="2" fill="#646464"/>
<rect x="2396" y="1012" width="2" height="4" fill="#800000"/>
<rect x="2406" y="1012" width="2" height="10" fill="#800000"/>
<rect x="2416" y="1012" width="2" height="15" fill="#800000"/>
<rect x="2426" y="1012" width="2" height="21" fill="#800000"/>
<rect x="2436" y="1012" width="2" height="25" fill="#800000"/>
<rect x="2446" y="1012" width="2" height="25" fill="#800000"/>
<rect x="2456" y="1012" width="2" height="24" fill="#800000"/>
<rect x="2466" y="1012" width="2" height="21" fill="#800000"/>
</g>
<g shape-rendering="crispEdges">
<rect x="17" y="374" width="1" height="27" fill="#000"/>
<rect x="14" y="377" width="7" height="5" fill="#000"/>
<rect x="15" y="378" width="5" height="3" fill="#fff"/>
<rect x="27" y="370" width="1" height="35" fill="#000"/>
<rect x="24" y="376" width="7" height="22" fill="#000"/>
<rect x="37" y="376" width="1" height="29" fill="#000"/>
<rect x="34" y="381" width="7" height="17" fill="#000"/>
<rect x="35" y="382" width="5" height="15" fill="#fff"/>
<rect x="47" y="366" width="1" height="22" fill="#000"/>
<rect x="44" y="370" width="7" height="12" fill="#000"/>
<rect x="45" y="371" width="5" height="10" fill="#fff"/>
<rect x="57" y="366" width="1" height="29" fill="#000"/>
<rect x="54" y="370" width="7" height="25" fill="#000"/>
<rect x="67" y="393" width="1" height="18" fill="#000"/>
<rect x="64" y="393" width="7" height="12" fill="#000"/>
<rect x="77" y="376" width="1" height="32" fill="#000"/>
<rect x="74" y="393" width="7" height="11" fill="#000"/>
<rect x="75" y="394" width="5" height="9" fill="#fff"/>
<rect x="87" y="376" width="1" height="25" fill="#000"/>
<rect x="84" y="389" width="7" height="9" fill="#000"/>
<rect x="97" y="396" width="1" height="51" fill="#000"/>
<rect x="94" y="396" width="7" height="45" fill="#000"/>
<rect x="107" y="432" width="1" height="22" fill="#000"/>
<rect x="104" y="439" width="7" height="12" fill="#000"/>
<rect x="117" y="439" width="1" height="31" fill="#000"/>
<rect x="114" y="445" width="7" height="16" fill="#000"/>
<rect x="127" y="439" width="1" height="31" fill="#000"/>
<rect x="124" y="450" width="7" height="11" fill="#000"/>
<rect x="125" y="451" width="5" height="9" fill="#fff"/>
<rect x="137" y="439" width="1" height="18" fill="#000"/>
<rect x="134" y="445" width="7" height="6" fill="#000"/>
<rect x="147" y="442" width="1" height="22" fill="#000"/>
<rect x="144" y="449" width="7" height="15" fill="#000"/>
<rect x="157" y="452" width="1" height="18" fill="#000"/>
<rect x="154" y="460" width="7" height="1" fill="#000"/>
<rect x="167" y="442" width="1" height="22" fill="#000"/>
<rect x="164" y="450" width="7" height="11" fill="#000"/>
<rect x="165" y="451" width="5" height="9" fill="#fff"/>
<rect x="177" y="426" width="1" height="25" fill="#90ee90"/>
<rect x="174" y="426" width="7" height="25" fill="#90ee90"/>
<rect x="175" y="427" width="5" height="23" fill="#fff"/>
<rect x="187" y="423" width="1" height="28" fill="#90ee90"/>
<rect x="184" y="426" width="7" height="21" fill="#90ee90"/>
<rect x="197" y="426" width="1" height="21" fill="#90ee90"/>
<rect x="194" y="439" width="7" height="8" fill="#90ee90"/>
<rect x="195" y="440" width="5" height="6" fill="#fff"/>
<rect x="207" y="410" width="1" height="30" fill="#90ee90"/>
<rect x="204" y="419" width="7" height="21" fill="#90ee90"/>
<rect x="205" y="420" width="5" height="19" fill="#fff"/>
<rect x="217" y="423" width="1" height="89" fill="#90ee90"/>
<rect x="214" y="423" width="7" height="47" fill="#90ee90"/>
<rect x="227" y="430" width="1" height="53" fill="#90ee90"/>
<rect x="224" y="439" width="7" height="30" fill="#90ee90"/>
<rect x="225" y="440" width="5" height="28" fill="#fff"/>
<rect x="237" y="416" width="1" height="42" fill="#90ee90"/>
<rect x="234" y="417" width="7" height="23" fill="#90ee90"/>
<rect x="235" y="418" width="5" height="21" fill="#fff"/>
<rect x="247" y="393" width="1" height="47" fill="#90ee90"/>
<rect x="244" y="399" width="7" height="24" fill="#90ee90"/>
<rect x="245" y="400" width="5" height="22" fill="#fff"/>
<rect x="257" y="376" width="1" height="28" fill="#90ee90"/>
<rect x="254" y="386" width="7" height="14" fill="#90ee90"/>
<rect x="255" y="387" width="5" height="12" fill="#fff"/>
<rect x="267" y="386" width="1" height="45" fill="#90ee90"/>
<rect x="264" y="386" width="7" height="29" fill="#90ee90"/>
<rect x="277" y="393" width="1" height="30" fill="#90ee90"/>
<rect x="274" y="399" width="7" height="16" fill="#90ee90"/>
<rect x="275" y="400" width="5" height="14" fill="#fff"/>
<rect x="287" y="343" width="1" height="61" fill="#90ee90"/>
<rect x="284" y="363" width="7" height="37" fill="#90ee90"/>
<rect x="285" y="364" width="5" height="35" fill="#fff"/>
<rect x="297" y="350" width="1" height="21" fill="#90ee90"/>
<rect x="294" y="354" width="7" height="10" fill="#90ee90"/>
<rect x="295" y="355" width="5" height="8" fill="#fff"/>
<rect x="307" y="353" width="1" height="47" fill="#90ee90"/>
<rect x="304" y="354" width="7" height="44" fill="#90ee90"/>
<rect x="317" y="380" width="1" height="27" fill="#90ee90"/>
<rect x="314" y="396" width="7" height="8" fill="#90ee90"/>
<rect x="327" y="389" width="1" height="45" fill="#000"/>
<rect x="324" y="403" width="7" height="28" fill="#000"/>
<rect x="337" y="426" width="1" height="28" fill="#000"/>
<rect x="334" y="429" width="7" height="18" fill="#000"/>
<rect x="347" y="432" width="1" height="22" fill="#000"/>
<rect x="344" y="442" width="7" height="4" fill="#000"/>
<rect x="345" y="443" width="5" height="2" fill="#fff"/>
<rect x="357" y="442" width="1" height="12" fill="#000"/>
<rect x="354" y="442" width="7" height="9" fill="#000"/>
<rect x="367" y="449" width="1" height="37" fill="#000"/>
<rect x="364" y="449" width="7" height="35" fill="#000"/>
<rect x="377" y="472" width="1" height="71" fill="#000"/>
<rect x="374" y="482" width="7" height="28" fill="#000"/>
<rect x="387" y="505" width="1" height="30" fill="#000"/>
<rect x="384" y="505" width="7" height="15" fill="#000"/>
<rect x="397" y="498" width="1" height="27" fill="#000"/>
<rect x="394" y="501" width="7" height="19" fill="#000"/>
<rect x="395" y="502" width="5" height="17" fill="#fff"/>
<rect x="407" y="488" width="1" height="32" fill="#000"/>
<rect x="404" y="501" width="7" height="15" fill="#000"/>
<rect x="417" y="498" width="1" height="35" fill="#000"/>
<rect x="414" y="505" width="7" height="11" fill="#000"/>
<rect x="415" y="506" width="5" height="9" fill="#fff"/>
<rect x="427" y="498" width="1" height="15" fill="#000"/>
<rect x="424" y="502" width="7" height="4" fill="#000"/>
<rect x="425" y="503" width="5" height="2" fill="#fff"/>
<rect x="437" y="495" width="1" height="21" fill="#000"/>
<rect x="434" y="502" width="7" height="1" fill="#000"/>
<rect x="447" y="498" width="1" height="61" fill="#000"/>
<rect x="444" y="501" width="7" height="42" fill="#000"/>
<rect x="457" y="483" width="1" height="70" fill="#000"/>
<rect x="454" y="505" width="7" height="38" fill="#000"/>
<rect x="455" y="506" width="5" height="36" fill="#fff"/>
<rect x="467" y="485" width="1" height="41" fill="#000"/>
<rect x="464" y="505" width="7" height="5" fill="#000"/>
<rect x="477" y="445" width="1" height="71" fill="#90ee90"/>
<rect x="474" y="462" width="7" height="48" fill="#90ee90"/>
<rect x="475" y="463" width="5" height="46" fill="#fff"/>
<rect x="487" y="462" width="1" height="31" fill="#90ee90"/>
<rect x="484" y="462" width="7" height="21" fill="#90ee90"/>
<rect x="497" y="459" width="1" height="37" fill="#90ee90"/>
<rect x="494" y="468" width="7" height="15" fill="#90ee90"/>
<rect x="495" y="469" width="5" height="13" fill="#fff"/>
<rect x="507" y="445" width="1" height="32" fill="#90ee90"/>
<rect x="504" y="468" width="7" height="1" fill="#90ee90"/>
<rect x="517" y="455" width="1" height="28" fill="#90ee90"/>
<rect x="514" y="462" width="7" height="5" fill="#90ee90"/>
<rect x="515" y="463" width="5" height="3" fill="#fff"/>
<rect x="527" y="462" width="1" height="11" fill="#90ee90"/>
<rect x="524" y="462" width="7" height="11" fill="#90ee90"/>
<rect x="537" y="472" width="1" height="21" fill="#90ee90"/>
<rect x="534" y="472" width="7" height="18" fill="#90ee90"/>
<rect x="547" y="478" width="1" height="15" fill="#90ee90"/>
<rect x="544" y="485" width="7" height="5" fill="#90ee90"/>
<rect x="545" y="486" width="5" height="3" fill="#fff"/>
<rect x="557" y="468" width="1" height="22" fill="#90ee90"/>
<rect x="554" y="485" width="7" height="1" fill="#90ee90"/>
<rect x="567" y="475" width="1" height="15" fill="#90ee90"/>
<rect x="564" y="475" width="7" height="11" fill="#90ee90"/>
<rect x="565" y="476" width="5" height="9" fill="#fff"/>
<rect x="577" y="472" width="1" height="11" fill="#90ee90"/>
<rect x="574" y="475" width="7" height="4" fill="#90ee90"/>
<rect x="587" y="475" width="1" height="24" fill="#90ee90"/>
<rect x="584" y="478" width="7" height="1" fill="#90ee90"/>
<rect x="597" y="478" width="1" height="21" fill="#90ee90"/>
<rect x="594" y="478" width="7" height="8" fill="#90ee90"/>
<rect x="607" y="478" width="1" height="15" fill="#90ee90"/>
<rect x="604" y="482" width="7" height="4" fill="#90ee90"/>
<rect x="605" y="483" width="5" height="2" fill="#fff"/>
<rect x="617" y="482" width="1" height="4" fill="#90ee90"/>
<rect x="614" y="482" width="7" height="1" fill="#90ee90"/>
<rect x="627" y="475" width="1" height="8" fill="#90ee90"/>
<rect x="624" y="482" width="7" height="1" fill="#90ee90"/>
<rect x="637" y="482" width="1" height="17" fill="#90ee90"/>
<rect x="634" y="482" width="7" height="17" fill="#90ee90"/>
<rect x="647" y="492" width="1" height="21" fill="#90ee90"/>
<rect x="644" y="495" width="7" height="4" fill="#90ee90"/>
<rect x="645" y="496" width="5" height="2" fill="#fff"/>
<rect x="657" y="478" width="1" height="21" fill="#90ee90"/>
<rect x="654" y="489" width="7" height="7" fill="#90ee90"/>
<rect x="655" y="490" width="5" height="5" fill="#fff"/>
<rect x="667" y="478" width="1" height="21" fill="#90ee90"/>
<rect x="664" y="489" width="7" height="4" fill="#90ee90"/>
<rect x="677" y="485" width="1" height="11" fill="#90ee90"/>
<rect x="674" y="485" width="7" height="8" fill="#90ee90"/>
<rect x="675" y="486" width="5" height="6" fill="#fff"/>
<rect x="687" y="485" width="1" height="14" fill="#90ee90"/>
<rect x="684" y="485" width="7" height="5" fill="#90ee90"/>
<rect x="697" y="472" width="1" height="18" fill="#90ee90"/>
<rect x="694" y="485" width="7" height="5" fill="#90ee90"/>
<rect x="695" y="486" width="5" height="3" fill="#fff"/>
<rect x="707" y="478" width="1" height="12" fill="#90ee90"/>
<rect x="704" y="478" width="7" height="8" fill="#90ee90"/>
<rect x="705" y="479" width="5" height="6" fill="#fff"/>
<rect x="717" y="472" width="1" height="14" fill="#90ee90"/>
<rect x="714" y="475" width="7" height="4" fill="#90ee90"/>
<rect x="715" y="476" width="5" height="2" fill="#fff"/>
<rect x="727" y="472" width="1" height="27" fill="#90ee90"/>
<rect x="724" y="475" width="7" height="18" fill="#90ee90"/>
<rect x="737" y="485" width="1" height="8" fill="#90ee90"/>
<rect x="734" y="489" width="7" height="4" fill="#90ee90"/>
<rect x="735" y="490" width="5" height="2" fill="#fff"/>
<rect x="747" y="485" width="1" height="8" fill="#90ee90"/>
<rect x="744" y="489" width="7" height="1" fill="#90ee90"/>
<rect x="757" y="475" width="1" height="15" fill="#90ee90"/>
<rect x="754" y="478" width="7" height="12" fill="#90ee90"/>
<rect x="755" y="479" width="5" height="10" fill="#fff"/>
<rect x="767" y="462" width="1" height="17" fill="#90ee90"/>
<rect x="764" y="466" width="7" height="13" fill="#90ee90"/>
<rect x="765" y="467" width="5" height="11" fill="#fff"/>
<rect x="777" y="449" width="1" height="18" fill="#90ee90"/>
<rect x="774" y="459" width="7" height="8" fill="#90ee90"/>
<rect x="775" y="460" width="5" height="6" fill="#fff"/>
<rect x="787" y="459" width="1" height="20" fill="#90ee90"/>
<rect x="784" y="459" width="7" height="10" fill="#90ee90"/>
<rect x="797" y="466" width="1" height="13" fill="#90ee90"/>
<rect x="794" y="468" width="7" height="5" fill="#90ee90"/>
<rect x="807" y="468" width="1" height="8" fill="#90ee90"/>
<rect x="804" y="472" width="7" height="4" fill="#90ee90"/>
<rect x="817" y="475" width="1" height="8" fill="#90ee90"/>
<rect x="814" y="475" width="7" height="4" fill="#90ee90"/>
<rect x="827" y="478" width="1" height="8" fill="#90ee90"/>
<rect x="824" y="478" width="7" height="1" fill="#90ee90"/>
<rect x="837" y="468" width="1" height="11" fill="#90ee90"/>
<rect x="834" y="472" width="7" height="7" fill="#90ee90"/>
<rect x="835" y="473" width="5" height="5" fill="#fff"/>
<rect x="847" y="468" width="1" height="11" fill="#90ee90"/>
<rect x="844" y="468" width="7" height="5" fill="#90ee90"/>
<rect x="845" y="469" width="5" height="3" fill="#fff"/>
<rect x="857" y="455" width="1" height="14" fill="#90ee90"/>
<rect x="854" y="459" width="7" height="10" fill="#90ee90"/>
<rect x="855" y="460" width="5" height="8" fill="#fff"/>
<rect x="867" y="452" width="1" height="15" fill="#90ee90"/>
<rect x="864" y="456" width="7" height="4" fill="#90ee90"/>
<rect x="865" y="457" width="5" height="2" fill="#fff"/>
<rect x="877" y="432" width="1" height="25" fill="#90ee90"/>
<rect x="874" y="442" width="7" height="15" fill="#90ee90"/>
<rect x="875" y="443" width="5" height="13" fill="#fff"/>
<rect x="887" y="422" width="1" height="21" fill="#90ee90"/>
<rect x="884" y="433" width="7" height="10" fill="#90ee90"/>
<rect x="885" y="434" width="5" height="8" fill="#fff"/>
<rect x="897" y="422" width="1" height="21" fill="#90ee90"/>
<rect x="894" y="433" width="7" height="8" fill="#90ee90"/>
<rect x="907" y="433" width="1" height="10" fill="#90ee90"/>
<rect x="904" y="440" width="7" height="1" fill="#90ee90"/>
<rect x="917" y="419" width="1" height="24" fill="#90ee90"/>
<rect x="914" y="422" width="7" height="19" fill="#90ee90"/>
<rect x="915" y="423" width="5" height="17" fill="#fff"/>
<rect x="927" y="409" width="1" height="25" fill="#90ee90"/>
<rect x="924" y="409" width="7" height="14" fill="#90ee90"/>
<rect x="925" y="410" width="5" height="12" fill="#fff"/>
<rect x="937" y="406" width="1" height="17" fill="#90ee90"/>
<rect x="934" y="409" width="7" height="11" fill="#90ee90"/>
<rect x="947" y="413" width="1" height="15" fill="#90ee90"/>
<rect x="944" y="419" width="7" height="1" fill="#90ee90"/>
<rect x="957" y="399" width="1" height="21" fill="#90ee90"/>
<rect x="954" y="399" width="7" height="21" fill="#90ee90"/>
<rect x="955" y="400" width="5" height="19" fill="#fff"/>
<rect x="967" y="397" width="1" height="20" fill="#90ee90"/>
<rect x="964" y="399" width="7" height="15" fill="#90ee90"/>
<rect x="977" y="383" width="1" height="45" fill="#90ee90"/>
<rect x="974" y="384" width="7" height="30" fill="#90ee90"/>
<rect x="975" y="385" width="5" height="28" fill="#fff"/>
<rect x="987" y="363" width="1" height="38" fill="#90ee90"/>
<rect x="984" y="373" width="7" height="11" fill="#90ee90"/>
<rect x="985" y="374" width="5" height="9" fill="#fff"/>
<rect x="997" y="363" width="1" height="28" fill="#90ee90"/>
<rect x="994" y="373" width="7" height="1" fill="#90ee90"/>
<rect x="1007" y="337" width="1" height="44" fill="#90ee90"/>
<rect x="1004" y="347" width="7" height="27" fill="#90ee90"/>
<rect x="1005" y="348" width="5" height="25" fill="#fff"/>
<rect x="1017" y="330" width="1" height="37" fill="#90ee90"/>
<rect x="1014" y="347" width="7" height="18" fill="#90ee90"/>
<rect x="1027" y="353" width="1" height="28" fill="#90ee90"/>
<rect x="1024" y="364" width="7" height="17" fill="#90ee90"/>
<rect x="1037" y="370" width="1" height="18" fill="#90ee90"/>
<rect x="1034" y="370" width="7" height="11" fill="#90ee90"/>
<rect x="1035" y="371" width="5" height="9" fill="#fff"/>
<rect x="1047" y="347" width="1" height="27" fill="#90ee90"/>
<rect x="1044" y="364" width="7" height="7" fill="#90ee90"/>
<rect x="1045" y="365" width="5" height="5" fill="#fff"/>
<rect x="1057" y="353" width="1" height="44" fill="#90ee90"/>
<rect x="1054" y="360" width="7" height="5" fill="#90ee90"/>
<rect x="1055" y="361" width="5" height="3" fill="#fff"/>
<rect x="1067" y="360" width="1" height="25" fill="#90ee90"/>
<rect x="1064" y="360" width="7" height="17" fill="#90ee90"/>
<rect x="1077" y="357" width="1" height="31" fill="#90ee90"/>
<rect x="1074" y="370" width="7" height="7" fill="#90ee90"/>
<rect x="1075" y="371" width="5" height="5" fill="#fff"/>
<rect x="1087" y="350" width="1" height="24" fill="#90ee90"/>
<rect x="1084" y="364" width="7" height="7" fill="#90ee90"/>
<rect x="1085" y="365" width="5" height="5" fill="#fff"/>
<rect x="1097" y="364" width="1" height="33" fill="#90ee90"/>
<rect x="1094" y="364" width="7" height="27" fill="#90ee90"/>
<rect x="1107" y="380" width="1" height="17" fill="#90ee90"/>
<rect x="1104" y="386" width="7" height="5" fill="#90ee90"/>
<rect x="1105" y="387" width="5" height="3" fill="#fff"/>
<rect x="1117" y="380" width="1" height="25" fill="#000"/>
<rect x="1114" y="386" width="7" height="15" fill="#000"/>
<rect x="1127" y="390" width="1" height="28" fill="#000"/>
<rect x="1124" y="400" width="7" height="8" fill="#000"/>
<rect x="1137" y="366" width="1" height="42" fill="#000"/>
<rect x="1134" y="390" width="7" height="18" fill="#000"/>
<rect x="1135" y="391" width="5" height="16" fill="#fff"/>
<rect x="1147" y="363" width="1" height="42" fill="#000"/>
<rect x="1144" y="390" width="7" height="11" fill="#000"/>
<rect x="1157" y="350" width="1" height="51" fill="#000"/>
<rect x="1154" y="370" width="7" height="31" fill="#000"/>
<rect x="1155" y="371" width="5" height="29" fill="#fff"/>
<rect x="1167" y="353" width="1" height="28" fill="#000"/>
<rect x="1164" y="360" width="7" height="11" fill="#000"/>
<rect x="1165" y="361" width="5" height="9" fill="#fff"/>
<rect x="1177" y="294" width="1" height="80" fill="#90ee90"/>
<rect x="1174" y="318" width="7" height="43" fill="#90ee90"/>
<rect x="1175" y="319" width="5" height="41" fill="#fff"/>
<rect x="1187" y="294" width="1" height="177" fill="#000"/>
<rect x="1184" y="318" width="7" height="153" fill="#000"/>
<rect x="1247" y="439" width="1" height="32" fill="#000"/>
<rect x="1244" y="458" width="7" height="13" fill="#000"/>
<rect x="1257" y="422" width="1" height="49" fill="#000"/>
<rect x="1254" y="439" width="7" height="32" fill="#000"/>
<rect x="1255" y="440" width="5" height="30" fill="#fff"/>
<rect x="1267" y="416" width="1" height="55" fill="#000"/>
<rect x="1264" y="439" width="7" height="4" fill="#000"/>
<rect x="1277" y="432" width="1" height="29" fill="#000"/>
<rect x="1274" y="442" width="7" height="12" fill="#000"/>
<rect x="1287" y="429" width="1" height="32" fill="#000"/>
<rect x="1284" y="442" width="7" height="11" fill="#000"/>
<rect x="1285" y="443" width="5" height="9" fill="#fff"/>
<rect x="1297" y="432" width="1" height="29" fill="#000"/>
<rect x="1294" y="433" width="7" height="10" fill="#000"/>
<rect x="1295" y="434" width="5" height="8" fill="#fff"/>
<rect x="1307" y="422" width="1" height="21" fill="#000"/>
<rect x="1304" y="430" width="7" height="4" fill="#000"/>
<rect x="1305" y="431" width="5" height="2" fill="#fff"/>
<rect x="1317" y="426" width="1" height="14" fill="#000"/>
<rect x="1314" y="426" width="7" height="12" fill="#000"/>
<rect x="1327" y="416" width="1" height="24" fill="#90ee90"/>
<rect x="1324" y="416" width="7" height="22" fill="#90ee90"/>
<rect x="1325" y="417" width="5" height="20" fill="#fff"/>
<rect x="1337" y="416" width="1" height="27" fill="#90ee90"/>
<rect x="1334" y="416" width="7" height="27" fill="#90ee90"/>
<rect x="1347" y="437" width="1" height="21" fill="#90ee90"/>
<rect x="1344" y="442" width="7" height="11" fill="#90ee90"/>
<rect x="1357" y="445" width="1" height="18" fill="#90ee90"/>
<rect x="1354" y="452" width="7" height="11" fill="#90ee90"/>
<rect x="1367" y="442" width="1" height="21" fill="#90ee90"/>
<rect x="1364" y="445" width="7" height="18" fill="#90ee90"/>
<rect x="1365" y="446" width="5" height="16" fill="#fff"/>
<rect x="1377" y="445" width="1" height="11" fill="#90ee90"/>
<rect x="1374" y="445" width="7" height="5" fill="#90ee90"/>
<rect x="1387" y="445" width="1" height="11" fill="#90ee90"/>
<rect x="1384" y="445" width="7" height="5" fill="#90ee90"/>
<rect x="1385" y="446" width="5" height="3" fill="#fff"/>
<rect x="1397" y="442" width="1" height="12" fill="#90ee90"/>
<rect x="1394" y="445" width="7" height="5" fill="#90ee90"/>
<rect x="1407" y="432" width="1" height="18" fill="#90ee90"/>
<rect x="1404" y="439" width="7" height="11" fill="#90ee90"/>
<rect x="1405" y="440" width="5" height="9" fill="#fff"/>
<rect x="1417" y="437" width="1" height="16" fill="#90ee90"/>
<rect x="1414" y="439" width="7" height="7" fill="#90ee90"/>
<rect x="1427" y="445" width="1" height="9" fill="#90ee90"/>
<rect x="1424" y="445" width="7" height="5" fill="#90ee90"/>
<rect x="1437" y="429" width="1" height="25" fill="#90ee90"/>
<rect x="1434" y="437" width="7" height="13" fill="#90ee90"/>
<rect x="1435" y="438" width="5" height="11" fill="#fff"/>
<rect x="1447" y="430" width="1" height="13" fill="#90ee90"/>
<rect x="1444" y="430" width="7" height="8" fill="#90ee90"/>
<rect x="1445" y="431" width="5" height="6" fill="#fff"/>
<rect x="1457" y="373" width="1" height="57" fill="#90ee90"/>
<rect x="1454" y="373" width="7" height="54" fill="#90ee90"/>
<rect x="1455" y="374" width="5" height="52" fill="#fff"/>
<rect x="1467" y="366" width="1" height="29" fill="#90ee90"/>
<rect x="1464" y="373" width="7" height="14" fill="#90ee90"/>
<rect x="1477" y="373" width="1" height="18" fill="#90ee90"/>
<rect x="1474" y="386" width="7" height="5" fill="#90ee90"/>
<rect x="1487" y="376" width="1" height="21" fill="#90ee90"/>
<rect x="1484" y="390" width="7" height="1" fill="#90ee90"/>
<rect x="1497" y="383" width="1" height="12" fill="#90ee90"/>
<rect x="1494" y="390" width="7" height="1" fill="#90ee90"/>
<rect x="1507" y="366" width="1" height="25" fill="#90ee90"/>
<rect x="1504" y="366" width="7" height="25" fill="#90ee90"/>
<rect x="1505" y="367" width="5" height="23" fill="#fff"/>
<rect x="1517" y="366" width="1" height="29" fill="#90ee90"/>
<rect x="1514" y="366" width="7" height="15" fill="#90ee90"/>
<rect x="1527" y="373" width="1" height="14" fill="#90ee90"/>
<rect x="1524" y="380" width="7" height="7" fill="#90ee90"/>
<rect x="1537" y="380" width="1" height="17" fill="#90ee90"/>
<rect x="1534" y="386" width="7" height="1" fill="#90ee90"/>
<rect x="1547" y="383" width="1" height="14" fill="#90ee90"/>
<rect x="1544" y="386" width="7" height="9" fill="#90ee90"/>
<rect x="1557" y="394" width="1" height="7" fill="#90ee90"/>
<rect x="1554" y="394" width="7" height="3" fill="#90ee90"/>
<rect x="1567" y="386" width="1" height="11" fill="#90ee90"/>
<rect x="1564" y="394" width="7" height="3" fill="#90ee90"/>
<rect x="1565" y="395" width="5" height="1" fill="#fff"/>
<rect x="1577" y="390" width="1" height="7" fill="#90ee90"/>
<rect x="1574" y="390" width="7" height="5" fill="#90ee90"/>
<rect x="1575" y="391" width="5" height="3" fill="#fff"/>
<rect x="1587" y="376" width="1" height="15" fill="#90ee90"/>
<rect x="1584" y="380" width="7" height="11" fill="#90ee90"/>
<rect x="1585" y="381" width="5" height="9" fill="#fff"/>
<rect x="1597" y="370" width="1" height="15" fill="#90ee90"/>
<rect x="1594" y="380" width="7" height="5" fill="#90ee90"/>
<rect x="1607" y="380" width="1" height="15" fill="#90ee90"/>
<rect x="1604" y="384" width="7" height="11" fill="#90ee90"/>
<rect x="1617" y="380" width="1" height="15" fill="#90ee90"/>
<rect x="1614" y="380" width="7" height="15" fill="#90ee90"/>
<rect x="1615" y="381" width="5" height="13" fill="#fff"/>
<rect x="1627" y="370" width="1" height="17" fill="#90ee90"/>
<rect x="1624" y="376" width="7" height="5" fill="#90ee90"/>
<rect x="1625" y="377" width="5" height="3" fill="#fff"/>
<rect x="1637" y="370" width="1" height="17" fill="#90ee90"/>
<rect x="1634" y="380" width="7" height="1" fill="#90ee90"/>
<rect x="1647" y="380" width="1" height="7" fill="#90ee90"/>
<rect x="1644" y="380" width="7" height="1" fill="#90ee90"/>
<rect x="1657" y="376" width="1" height="9" fill="#90ee90"/>
<rect x="1654" y="376" width="7" height="5" fill="#90ee90"/>
<rect x="1655" y="377" width="5" height="3" fill="#fff"/>
<rect x="1667" y="370" width="1" height="15" fill="#90ee90"/>
<rect x="1664" y="370" width="7" height="7" fill="#90ee90"/>
<rect x="1665" y="371" width="5" height="5" fill="#fff"/>
<rect x="1677" y="360" width="1" height="17" fill="#90ee90"/>
<rect x="1674" y="370" width="7" height="4" fill="#90ee90"/>
<rect x="1687" y="370" width="1" height="15" fill="#90ee90"/>
<rect x="1684" y="373" width="7" height="12" fill="#90ee90"/>
<rect x="1697" y="376" width="1" height="15" fill="#90ee90"/>
<rect x="1694" y="384" width="7" height="3" fill="#90ee90"/>
<rect x="1707" y="373" width="1" height="14" fill="#90ee90"/>
<rect x="1704" y="373" width="7" height="14" fill="#90ee90"/>
<rect x="1705" y="374" width="5" height="12" fill="#fff"/>
<rect x="1717" y="370" width="1" height="4" fill="#90ee90"/>
<rect x="1714" y="370" width="7" height="4" fill="#90ee90"/>
<rect x="1715" y="371" width="5" height="2" fill="#fff"/>
<rect x="1727" y="357" width="1" height="16" fill="#90ee90"/>
<rect x="1724" y="364" width="7" height="7" fill="#90ee90"/>
<rect x="1725" y="365" width="5" height="5" fill="#fff"/>
<rect x="1737" y="360" width="1" height="13" fill="#90ee90"/>
<rect x="1734" y="364" width="7" height="7" fill="#90ee90"/>
<rect x="1735" y="365" width="5" height="5" fill="#fff"/>
<rect x="1747" y="357" width="1" height="16" fill="#90ee90"/>
<rect x="1744" y="364" width="7" height="7" fill="#90ee90"/>
<rect x="1745" y="365" width="5" height="5" fill="#fff"/>
<rect x="1757" y="364" width="1" height="13" fill="#90ee90"/>
<rect x="1754" y="367" width="7" height="1" fill="#90ee90"/>
<rect x="1767" y="362" width="1" height="11" fill="#90ee90"/>
<rect x="1764" y="365" width="7" height="6" fill="#90ee90"/>
<rect x="1765" y="366" width="5" height="4" fill="#fff"/>
<rect x="1777" y="364" width="1" height="17" fill="#90ee90"/>
<rect x="1774" y="366" width="7" height="7" fill="#90ee90"/>
<rect x="1775" y="367" width="5" height="5" fill="#fff"/>
<rect x="1787" y="364" width="1" height="9" fill="#90ee90"/>
<rect x="1784" y="365" width="7" height="6" fill="#90ee90"/>
<rect x="1785" y="366" width="5" height="4" fill="#fff"/>
<rect x="1797" y="350" width="1" height="23" fill="#90ee90"/>
<rect x="1794" y="360" width="7" height="7" fill="#90ee90"/>
<rect x="1795" y="361" width="5" height="5" fill="#fff"/>
<rect x="1807" y="357" width="1" height="16" fill="#90ee90"/>
<rect x="1804" y="360" width="7" height="7" fill="#90ee90"/>
<rect x="1817" y="362" width="1" height="11" fill="#90ee90"/>
<rect x="1814" y="364" width="7" height="1" fill="#90ee90"/>
<rect x="1827" y="364" width="1" height="9" fill="#90ee90"/>
<rect x="1824" y="364" width="7" height="7" fill="#90ee90"/>
<rect x="1825" y="365" width="5" height="5" fill="#fff"/>
<rect x="1837" y="357" width="1" height="16" fill="#90ee90"/>
<rect x="1834" y="357" width="7" height="10" fill="#90ee90"/>
<rect x="1835" y="358" width="5" height="8" fill="#fff"/>
<rect x="1847" y="347" width="1" height="15" fill="#90ee90"/>
<rect x="1844" y="347" width="7" height="11" fill="#90ee90"/>
<rect x="1845" y="348" width="5" height="9" fill="#fff"/>
<rect x="1857" y="340" width="1" height="11" fill="#90ee90"/>
<rect x="1854" y="340" width="7" height="8" fill="#90ee90"/>
<rect x="1855" y="341" width="5" height="6" fill="#fff"/>
<rect x="1867" y="340" width="1" height="25" fill="#90ee90"/>
<rect x="1864" y="340" width="7" height="21" fill="#90ee90"/>
<rect x="1877" y="360" width="1" height="14" fill="#90ee90"/>
<rect x="1874" y="364" width="7" height="1" fill="#90ee90"/>
<rect x="1887" y="350" width="1" height="23" fill="#90ee90"/>
<rect x="1884" y="360" width="7" height="7" fill="#90ee90"/>
<rect x="1885" y="361" width="5" height="5" fill="#fff"/>
<rect x="1897" y="353" width="1" height="18" fill="#90ee90"/>
<rect x="1894" y="364" width="7" height="1" fill="#90ee90"/>
<rect x="1907" y="364" width="1" height="12" fill="#90ee90"/>
<rect x="1904" y="366" width="7" height="7" fill="#90ee90"/>
<rect x="1905" y="367" width="5" height="5" fill="#fff"/>
<rect x="1917" y="356" width="1" height="29" fill="#90ee90"/>
<rect x="1914" y="362" width="7" height="9" fill="#90ee90"/>
<rect x="1915" y="363" width="5" height="7" fill="#fff"/>
<rect x="1927" y="364" width="1" height="27" fill="#90ee90"/>
<rect x="1924" y="364" width="7" height="9" fill="#90ee90"/>
<rect x="1925" y="365" width="5" height="7" fill="#fff"/>
<rect x="1937" y="356" width="1" height="17" fill="#90ee90"/>
<rect x="1934" y="365" width="7" height="1" fill="#90ee90"/>
<rect x="1947" y="363" width="1" height="22" fill="#000"/>
<rect x="1944" y="372" width="7" height="9" fill="#000"/>
<rect x="1957" y="373" width="1" height="28" fill="#000"/>
<rect x="1954" y="383" width="7" height="1" fill="#000"/>
<rect x="1967" y="383" width="1" height="18" fill="#000"/>
<rect x="1964" y="383" width="7" height="12" fill="#000"/>
<rect x="1977" y="383" width="1" height="18" fill="#000"/>
<rect x="1974" y="390" width="7" height="5" fill="#000"/>
<rect x="1975" y="391" width="5" height="3" fill="#fff"/>
<rect x="1987" y="380" width="1" height="21" fill="#000"/>
<rect x="1984" y="390" width="7" height="5" fill="#000"/>
<rect x="1997" y="389" width="1" height="35" fill="#000"/>
<rect x="1994" y="393" width="7" height="18" fill="#000"/>
<rect x="2007" y="403" width="1" height="31" fill="#000"/>
<rect x="2004" y="409" width="7" height="18" fill="#000"/>
<rect x="2017" y="422" width="1" height="22" fill="#000"/>
<rect x="2014" y="426" width="7" height="5" fill="#000"/>
<rect x="2027" y="422" width="1" height="12" fill="#000"/>
<rect x="2024" y="426" width="7" height="5" fill="#000"/>
<rect x="2025" y="427" width="5" height="3" fill="#fff"/>
<rect x="2037" y="419" width="1" height="19" fill="#000"/>
<rect x="2034" y="426" width="7" height="8" fill="#000"/>
<rect x="2047" y="419" width="1" height="19" fill="#000"/>
<rect x="2044" y="422" width="7" height="12" fill="#000"/>
<rect x="2045" y="423" width="5" height="10" fill="#fff"/>
<rect x="2057" y="406" width="1" height="21" fill="#000"/>
<rect x="2054" y="409" width="7" height="11" fill="#000"/>
<rect x="2055" y="410" width="5" height="9" fill="#fff"/>
<rect x="2067" y="403" width="1" height="11" fill="#90ee90"/>
<rect x="2064" y="403" width="7" height="7" fill="#90ee90"/>
<rect x="2065" y="404" width="5" height="5" fill="#fff"/>
<rect x="2077" y="403" width="1" height="20" fill="#90ee90"/>
<rect x="2074" y="403" width="7" height="11" fill="#90ee90"/>
<rect x="2087" y="409" width="1" height="29" fill="#90ee90"/>
<rect x="2084" y="419" width="7" height="15" fill="#90ee90"/>
<rect x="2097" y="419" width="1" height="25" fill="#90ee90"/>
<rect x="2094" y="419" width="7" height="15" fill="#90ee90"/>
<rect x="2095" y="420" width="5" height="13" fill="#fff"/>
<rect x="2107" y="419" width="1" height="19" fill="#90ee90"/>
<rect x="2104" y="419" width="7" height="8" fill="#90ee90"/>
<rect x="2117" y="422" width="1" height="22" fill="#90ee90"/>
<rect x="2114" y="426" width="7" height="12" fill="#90ee90"/>
<rect x="2127" y="432" width="1" height="21" fill="#90ee90"/>
<rect x="2124" y="436" width="7" height="11" fill="#90ee90"/>
<rect x="2137" y="442" width="1" height="68" fill="#000"/>
<rect x="2134" y="449" width="7" height="38" fill="#000"/>
<rect x="2147" y="192" width="1" height="295" fill="#90ee90"/>
<rect x="2144" y="299" width="7" height="188" fill="#90ee90"/>
<rect x="2145" y="300" width="5" height="186" fill="#fff"/>
<rect x="2157" y="222" width="1" height="72" fill="#90ee90"/>
<rect x="2154" y="281" width="7" height="13" fill="#90ee90"/>
<rect x="2155" y="282" width="5" height="11" fill="#fff"/>
<rect x="2167" y="251" width="1" height="74" fill="#90ee90"/>
<rect x="2164" y="281" width="7" height="4" fill="#90ee90"/>
<rect x="2177" y="248" width="1" height="44" fill="#90ee90"/>
<rect x="2174" y="281" width="7" height="4" fill="#90ee90"/>
<rect x="2175" y="282" width="5" height="2" fill="#fff"/>
<rect x="2187" y="222" width="1" height="64" fill="#90ee90"/>
<rect x="2184" y="238" width="7" height="44" fill="#90ee90"/>
<rect x="2185" y="239" width="5" height="42" fill="#fff"/>
<rect x="2197" y="143" width="1" height="103" fill="#90ee90"/>
<rect x="2194" y="156" width="7" height="83" fill="#90ee90"/>
<rect x="2195" y="157" width="5" height="81" fill="#fff"/>
<rect x="2207" y="117" width="1" height="54" fill="#90ee90"/>
<rect x="2204" y="156" width="7" height="14" fill="#90ee90"/>
<rect x="2217" y="123" width="1" height="54" fill="#90ee90"/>
<rect x="2214" y="166" width="7" height="4" fill="#90ee90"/>
<rect x="2215" y="167" width="5" height="2" fill="#fff"/>
<rect x="2227" y="143" width="1" height="24" fill="#90ee90"/>
<rect x="2224" y="156" width="7" height="11" fill="#90ee90"/>
<rect x="2225" y="157" width="5" height="9" fill="#fff"/>
<rect x="2237" y="126" width="1" height="45" fill="#90ee90"/>
<rect x="2234" y="156" width="7" height="11" fill="#90ee90"/>
<rect x="2247" y="153" width="1" height="27" fill="#90ee90"/>
<rect x="2244" y="166" width="7" height="14" fill="#90ee90"/>
<rect x="2257" y="179" width="1" height="11" fill="#90ee90"/>
<rect x="2254" y="179" width="7" height="11" fill="#90ee90"/>
<rect x="2267" y="179" width="1" height="21" fill="#90ee90"/>
<rect x="2264" y="186" width="7" height="4" fill="#90ee90"/>
<rect x="2265" y="187" width="5" height="2" fill="#fff"/>
<rect x="2277" y="186" width="1" height="27" fill="#000"/>
<rect x="2274" y="186" width="7" height="14" fill="#000"/>
<rect x="2287" y="186" width="1" height="17" fill="#000"/>
<rect x="2284" y="196" width="7" height="4" fill="#000"/>
<rect x="2285" y="197" width="5" height="2" fill="#fff"/>
<rect x="2297" y="196" width="1" height="20" fill="#000"/>
<rect x="2294" y="196" width="7" height="10" fill="#000"/>
<rect x="2307" y="196" width="1" height="17" fill="#000"/>
<rect x="2304" y="203" width="7" height="3" fill="#000"/>
<rect x="2305" y="204" width="5" height="1" fill="#fff"/>
<rect x="2317" y="182" width="1" height="22" fill="#000"/>
<rect x="2314" y="192" width="7" height="12" fill="#000"/>
<rect x="2315" y="193" width="5" height="10" fill="#fff"/>
<rect x="2327" y="166" width="1" height="34" fill="#000"/>
<rect x="2324" y="173" width="7" height="20" fill="#000"/>
<rect x="2325" y="174" width="5" height="18" fill="#fff"/>
<rect x="2337" y="173" width="1" height="17" fill="#000"/>
<rect x="2334" y="173" width="7" height="17" fill="#000"/>
<rect x="2347" y="176" width="1" height="35" fill="#000"/>
<rect x="2344" y="179" width="7" height="11" fill="#000"/>
<rect x="2345" y="180" width="5" height="9" fill="#fff"/>
<rect x="2357" y="169" width="1" height="18" fill="#000"/>
<rect x="2354" y="169" width="7" height="11" fill="#000"/>
<rect x="2355" y="170" width="5" height="9" fill="#fff"/>
<rect x="2367" y="163" width="1" height="24" fill="#000"/>
<rect x="2364" y="169" width="7" height="1" fill="#000"/>
<rect x="2377" y="156" width="1" height="18" fill="#000"/>
<rect x="2374" y="163" width="7" height="7" fill="#000"/>
<rect x="2375" y="164" width="5" height="5" fill="#fff"/>
<rect x="2387" y="163" width="1" height="20" fill="#000"/>
<rect x="2384" y="163" width="7" height="17" fill="#000"/>
<rect x="2397" y="169" width="1" height="42" fill="#000"/>
<rect x="2394" y="179" width="7" height="28" fill="#000"/>
<rect x="2407" y="196" width="1" height="15" fill="#000"/>
<rect x="2404" y="196" width="7" height="7" fill="#000"/>
<rect x="2405" y="197" width="5" height="5" fill="#fff"/>
<rect x="2417" y="179" width="1" height="17" fill="#000"/>
<rect x="2414" y="186" width="7" height="10" fill="#000"/>
<rect x="2415" y="187" width="5" height="8" fill="#fff"/>
<rect x="2427" y="182" width="1" height="14" fill="#000"/>
<rect x="2424" y="186" width="7" height="7" fill="#000"/>
<rect x="2437" y="189" width="1" height="15" fill="#000"/>
<rect x="2434" y="189" width="7" height="4" fill="#000"/>
<rect x="2435" y="190" width="5" height="2" fill="#fff"/>
<rect x="2447" y="182" width="1" height="14" fill="#000"/>
<rect x="2444" y="189" width="7" height="4" fill="#000"/>
<rect x="2457" y="182" width="1" height="19" fill="#000"/>
<rect x="2454" y="192" width="7" height="4" fill="#000"/>
<rect x="2467" y="172" width="1" height="24" fill="#000"/>
<rect x="2464" y="180" width="7" height="16" fill="#000"/>
<rect x="2465" y="181" width="5" height="14" fill="#fff"/>
<rect x="2477" y="172" width="1" height="32" fill="#000"/>
<rect x="2474" y="180" width="7" height="3" fill="#000"/>
<rect x="2475" y="181" width="5" height="1" fill="#ff0000"/>
</g>
<g shape-rendering="crispEdges">
<rect x="1716" y="52" width="3" height="649" fill="#ff0000"/>
<rect x="1717" y="216" width="767" height="5" fill="#000"/>
<rect x="1717" y="226" width="767" height="5" fill="#ff0000"/>
<rect x="1717" y="269" width="767" height="4" fill="#ff0000"/>
<rect x="1717" y="293" width="767" height="5" fill="#ff0000"/>
<rect x="1717" y="316" width="767" height="2" fill="#ff0000"/>
<rect x="1717" y="329" width="767" height="3" fill="#ff0000"/>
<rect x="1717" y="335" width="767" height="4" fill="#ff0000"/>
<rect x="1717" y="341" width="767" height="5" fill="#ff0000"/>
<rect x="1717" y="364" width="767" height="8" fill="#ff0000"/>
<rect x="1717" y="414" width="767" height="5" fill="#ff0000"/>
<rect x="1717" y="444" width="767" height="3" fill="#ff0000"/>
<rect x="1717" y="448" width="767" height="2" fill="#ff0000"/>
<rect x="1717" y="509" width="767" height="4" fill="#ff0000"/>
<rect x="1717" y="555" width="767" height="5" fill="#ff0000"/>
<rect x="1717" y="572" width="767" height="5" fill="#000"/>
</g>
<g shape-rendering="crispEdges">
<rect x="13" y="356" width="230" height="1" fill="#ffff00"/>
<rect x="13" y="373" width="230" height="1" fill="#ff0000"/>
<rect x="13" y="389" width="230" height="1" fill="#008000"/>
<rect x="13" y="405" width="230" height="1" fill="#00ffff"/>
<rect x="13" y="422" width="230" height="1" fill="#0000ff"/>
<rect x="243" y="247" width="120" height="1" fill="#0000ff"/>
<rect x="243" y="279" width="120" height="1" fill="#00ffff"/>
<rect x="243" y="311" width="120" height="1" fill="#008000"/>
<rect x="243" y="342" width="120" height="1" fill="#ff0000"/>
<rect x="243" y="374" width="120" height="1" fill="#ffff00"/>
<rect x="363" y="490" width="520" height="1" fill="#ffff00"/>
<rect x="363" y="521" width="520" height="1" fill="#ff0000"/>
<rect x="363" y="552" width="520" height="1" fill="#008000"/>
<rect x="363" y="583" width="520" height="1" fill="#00ffff"/>
<rect x="363" y="615" width="520" height="1" fill="#0000ff"/>
<rect x="883" y="366" width="300" height="1" fill="#0000ff"/>
<rect x="883" y="381" width="300" height="1" fill="#00ffff"/>
<rect x="883" y="396" width="300" height="1" fill="#008000"/>
<rect x="883" y="412" width="300" height="1" fill="#ff0000"/>
<rect x="883" y="427" width="300" height="1" fill="#ffff00"/>
<rect x="1453" y="239" width="540" height="1" fill="#0000ff"/>
<rect x="1453" y="267" width="540" height="1" fill="#00ffff"/>
<rect x="1453" y="295" width="540" height="1" fill="#008000"/>
<rect x="1453" y="323" width="540" height="1" fill="#ff0000"/>
<rect x="1453" y="351" width="540" height="1" fill="#ffff00"/>
<rect x="1993" y="412" width="150" height="1" fill="#ffff00"/>
<rect x="1993" y="431" width="150" height="1" fill="#ff0000"/>
<rect x="1993" y="449" width="150" height="1" fill="#008000"/>
<rect x="1993" y="468" width="150" height="1" fill="#00ffff"/>
<rect x="1993" y="487" width="150" height="1" fill="#0000ff"/>
<rect x="2143" y="174" width="330" height="1" fill="#0000ff"/>
<rect x="2143" y="215" width="330" height="1" fill="#00ffff"/>
<rect x="2143" y="257" width="330" height="1" fill="#008000"/>
<rect x="2143" y="299" width="330" height="1" fill="#ff0000"/>
<rect x="2143" y="341" width="330" height="1" fill="#ffff00"/>
<rect x="13" y="438" width="230" height="1" fill="#fff"/>
<rect x="243" y="215" width="120" height="1" fill="#fff"/>
<rect x="363" y="646" width="520" height="1" fill="#fff"/>
<rect x="883" y="351" width="300" height="1" fill="#fff"/>
<rect x="1453" y="211" width="540" height="1" fill="#fff"/>
<rect x="1993" y="506" width="150" height="1" fill="#fff"/>
<rect x="2143" y="133" width="330" height="1" fill="#fff"/>
</g>
<rect x="13" y="324" width="10" height="1" fill="#000" shape-rendering="crispEdges"/>
<rect x="23" y="340" width="10" height="1" fill="#000" shape-rendering="crispEdges"/>
<rect x="33" y="350" width="10" height="1" fill="#000" shape-rendering="crispEdges"/>
<rect x="43" y="360" width="20" height="1" fill="#000" shape-rendering="crispEdges"/>
<rect x="63" y="363" width="40" height="1" fill="#000" shape-rendering="crispEdges"/>
<rect x="103" y="370" width="10" height="1" fill="#000" shape-rendering="crispEdges"/>
<rect x="113" y="386" width="10" height="1" fill="#000" shape-rendering="crispEdges"/>
<rect x="123" y="403" width="10" height="1" fill="#000" shape-rendering="crispEdges"/>
<rect x="133" y="413" width="10" height="1" fill="#000" shape-rendering="crispEdges"/>
<rect x="143" y="422" width="10" height="1" fill="#000" shape-rendering="crispEdges"/>
<rect x="153" y="429" width="10" height="1" fill="#000" shape-rendering="crispEdges"/>
<rect x="163" y="432" width="10" height="1" fill="#000" shape-rendering="crispEdges"/>
<rect x="322" y="314" width="10" height="1" fill="#000" shape-rendering="crispEdges"/>
<rect x="332" y="327" width="10" height="1" fill="#000" shape-rendering="crispEdges"/>
<rect x="342" y="353" width="10" height="1" fill="#000" shape-rendering="crispEdges"/>
<rect x="352" y="376" width="10" height="1" fill="#000" shape-rendering="crispEdges"/>
<rect x="362" y="396" width="10" height="1" fill="#000" shape-rendering="crispEdges"/>
<rect x="372" y="413" width="10" height="1" fill="#000" shape-rendering="crispEdges"/>
<rect x="382" y="439" width="10" height="1" fill="#000" shape-rendering="crispEdges"/>
<rect x="392" y="459" width="10" height="1" fill="#000" shape-rendering="crispEdges"/>
<rect x="403" y="472" width="10" height="1" fill="#000" shape-rendering="crispEdges"/>
<rect x="413" y="478" width="10" height="1" fill="#000" shape-rendering="crispEdges"/>
<rect x="423" y="482" width="50" height="1" fill="#000" shape-rendering="crispEdges"/>
<rect x="1113" y="337" width="10" height="1" fill="#000" shape-rendering="crispEdges"/>
<rect x="1123" y="347" width="50" height="1" fill="#000" shape-rendering="crispEdges"/>
<rect x="1183" y="271" width="10" height="1" fill="#000" shape-rendering="crispEdges"/>
<rect x="1193" y="281" width="10" height="1" fill="#000" shape-rendering="crispEdges"/>
<rect x="1203" y="324" width="10" height="1" fill="#000" shape-rendering="crispEdges"/>
<rect x="1213" y="363" width="10" height="1" fill="#000" shape-rendering="crispEdges"/>
<rect x="1223" y="399" width="10" height="1" fill="#000" shape-rendering="crispEdges"/>
<rect x="1233" y="419" width="10" height="1" fill="#000" shape-rendering="crispEdges"/>
<rect x="1243" y="422" width="80" height="1" fill="#000" shape-rendering="crispEdges"/>
<rect x="1943" y="343" width="20" height="1" fill="#000" shape-rendering="crispEdges"/>
<rect x="1963" y="350" width="10" height="1" fill="#000" shape-rendering="crispEdges"/>
<rect x="1973" y="353" width="10" height="1" fill="#000" shape-rendering="crispEdges"/>
<rect x="1983" y="357" width="10" height="1" fill="#000" shape-rendering="crispEdges"/>
<rect x="1993" y="360" width="10" height="1" fill="#000" shape-rendering="crispEdges"/>
<rect x="2003" y="366" width="10" height="1" fill="#000" shape-rendering="crispEdges"/>
<rect x="2013" y="380" width="10" height="1" fill="#000" shape-rendering="crispEdges"/>
<rect x="2023" y="393" width="10" height="1" fill="#000" shape-rendering="crispEdges"/>
<rect x="2033" y="399" width="10" height="1" fill="#000" shape-rendering="crispEdges"/>
<rect x="2043" y="403" width="10" height="1" fill="#000" shape-rendering="crispEdges"/>
<rect x="2053" y="406" width="10" height="1" fill="#000" shape-rendering="crispEdges"/>
<rect x="2133" y="399" width="10" height="1" fill="#000" shape-rendering="crispEdges"/>
<rect x="2273" y="87" width="10" height="1" fill="#000" shape-rendering="crispEdges"/>
<rect x="2283" y="110" width="10" height="1" fill="#000" shape-rendering="crispEdges"/>
<rect x="2293" y="130" width="10" height="1" fill="#000" shape-rendering="crispEdges"/>
<rect x="2303" y="149" width="10" height="1" fill="#000" shape-rendering="crispEdges"/>
<rect x="2313" y="156" width="120" height="1" fill="#000" shape-rendering="crispEdges"/>
<rect x="2433" y="159" width="10" height="1" fill="#000" shape-rendering="crispEdges"/>
<rect x="2443" y="163" width="30" height="1" fill="#000" shape-rendering="crispEdges"/>
<rect x="173" y="501" width="10" height="1" fill="#90ee90" shape-rendering="crispEdges"/>
<rect x="183" y="495" width="10" height="1" fill="#90ee90" shape-rendering="crispEdges"/>
<rect x="193" y="485" width="10" height="1" fill="#90ee90" shape-rendering="crispEdges"/>
<rect x="203" y="478" width="70" height="1" fill="#90ee90" shape-rendering="crispEdges"/>
<rect x="273" y="465" width="10" height="1" fill="#90ee90" shape-rendering="crispEdges"/>
<rect x="283" y="462" width="10" height="1" fill="#90ee90" shape-rendering="crispEdges"/>
<rect x="293" y="439" width="10" height="1" fill="#90ee90" shape-rendering="crispEdges"/>
<rect x="303" y="429" width="10" height="1" fill="#90ee90" shape-rendering="crispEdges"/>
<rect x="313" y="426" width="10" height="1" fill="#90ee90" shape-rendering="crispEdges"/>
<rect x="473" y="580" width="10" height="1" fill="#90ee90" shape-rendering="crispEdges"/>
<rect x="483" y="567" width="10" height="1" fill="#90ee90" shape-rendering="crispEdges"/>
<rect x="493" y="554" width="10" height="1" fill="#90ee90" shape-rendering="crispEdges"/>
<rect x="503" y="537" width="10" height="1" fill="#90ee90" shape-rendering="crispEdges"/>
<rect x="513" y="524" width="10" height="1" fill="#90ee90" shape-rendering="crispEdges"/>
<rect x="523" y="511" width="10" height="1" fill="#90ee90" shape-rendering="crispEdges"/>
<rect x="533" y="508" width="200" height="1" fill="#90ee90" shape-rendering="crispEdges"/>
<rect x="733" y="505" width="40" height="1" fill="#90ee90" shape-rendering="crispEdges"/>
<rect x="773" y="498" width="10" height="1" fill="#90ee90" shape-rendering="crispEdges"/>
<rect x="783" y="495" width="10" height="1" fill="#90ee90" shape-rendering="crispEdges"/>
<rect x="793" y="491" width="10" height="1" fill="#90ee90" shape-rendering="crispEdges"/>
<rect x="803" y="488" width="10" height="1" fill="#90ee90" shape-rendering="crispEdges"/>
<rect x="813" y="485" width="70" height="1" fill="#90ee90" shape-rendering="crispEdges"/>
<rect x="883" y="475" width="10" height="1" fill="#90ee90" shape-rendering="crispEdges"/>
<rect x="893" y="465" width="10" height="1" fill="#90ee90" shape-rendering="crispEdges"/>
<rect x="903" y="455" width="20" height="1" fill="#90ee90" shape-rendering="crispEdges"/>
<rect x="923" y="449" width="10" height="1" fill="#90ee90" shape-rendering="crispEdges"/>
<rect x="933" y="442" width="10" height="1" fill="#90ee90" shape-rendering="crispEdges"/>
<rect x="943" y="439" width="10" height="1" fill="#90ee90" shape-rendering="crispEdges"/>
<rect x="953" y="436" width="30" height="1" fill="#90ee90" shape-rendering="crispEdges"/>
<rect x="983" y="432" width="10" height="1" fill="#90ee90" shape-rendering="crispEdges"/>
<rect x="993" y="429" width="10" height="1" fill="#90ee90" shape-rendering="crispEdges"/>
<rect x="1003" y="419" width="10" height="1" fill="#90ee90" shape-rendering="crispEdges"/>
<rect x="1013" y="409" width="10" height="1" fill="#90ee90" shape-rendering="crispEdges"/>
<rect x="1023" y="399" width="10" height="1" fill="#90ee90" shape-rendering="crispEdges"/>
<rect x="1033" y="396" width="80" height="1" fill="#90ee90" shape-rendering="crispEdges"/>
<rect x="1173" y="436" width="10" height="1" fill="#90ee90" shape-rendering="crispEdges"/>
<rect x="1463" y="455" width="10" height="1" fill="#90ee90" shape-rendering="crispEdges"/>
<rect x="1473" y="436" width="10" height="1" fill="#90ee90" shape-rendering="crispEdges"/>
<rect x="1483" y="422" width="10" height="1" fill="#90ee90" shape-rendering="crispEdges"/>
<rect x="1493" y="409" width="10" height="1" fill="#90ee90" shape-rendering="crispEdges"/>
<rect x="1503" y="403" width="20" height="1" fill="#90ee90" shape-rendering="crispEdges"/>
<rect x="1523" y="399" width="140" height="1" fill="#90ee90" shape-rendering="crispEdges"/>
<rect x="1663" y="396" width="20" height="1" fill="#90ee90" shape-rendering="crispEdges"/>
<rect x="1683" y="393" width="50" height="1" fill="#90ee90" shape-rendering="crispEdges"/>
<rect x="1733" y="389" width="10" height="1" fill="#90ee90" shape-rendering="crispEdges"/>
<rect x="1743" y="386" width="10" height="1" fill="#90ee90" shape-rendering="crispEdges"/>
<rect x="1753" y="383" width="10" height="1" fill="#90ee90" shape-rendering="crispEdges"/>
<rect x="1763" y="380" width="90" height="1" fill="#90ee90" shape-rendering="crispEdges"/>
<rect x="1853" y="376" width="90" height="1" fill="#90ee90" shape-rendering="crispEdges"/>
<rect x="2063" y="462" width="10" height="1" fill="#90ee90" shape-rendering="crispEdges"/>
<rect x="2073" y="455" width="10" height="1" fill="#90ee90" shape-rendering="crispEdges"/>
<rect x="2083" y="452" width="50" height="1" fill="#90ee90" shape-rendering="crispEdges"/>
<rect x="2143" y="537" width="10" height="1" fill="#90ee90" shape-rendering="crispEdges"/>
<rect x="2153" y="501" width="10" height="1" fill="#90ee90" shape-rendering="crispEdges"/>
<rect x="2163" y="455" width="10" height="1" fill="#90ee90" shape-rendering="crispEdges"/>
<rect x="2173" y="406" width="10" height="1" fill="#90ee90" shape-rendering="crispEdges"/>
<rect x="2183" y="370" width="10" height="1" fill="#90ee90" shape-rendering="crispEdges"/>
<rect x="2193" y="340" width="10" height="1" fill="#90ee90" shape-rendering="crispEdges"/>
<rect x="2203" y="291" width="10" height="1" fill="#90ee90" shape-rendering="crispEdges"/>
<rect x="2213" y="251" width="10" height="1" fill="#90ee90" shape-rendering="crispEdges"/>
<rect x="2223" y="222" width="10" height="1" fill="#90ee90" shape-rendering="crispEdges"/>
<rect x="2233" y="205" width="10" height="1" fill="#90ee90" shape-rendering="crispEdges"/>
<rect x="2243" y="195" width="30" height="1" fill="#90ee90" shape-rendering="crispEdges"/>
<polygon points="13.3,302.9 21.7,302.9 17.5,307.5" fill="#000"/>
<polygon points="23.3,315.7 31.7,315.7 27.5,320.3" fill="#000"/>
<polygon points="33.3,329.7 41.7,329.7 37.5,334.3" fill="#000"/>
<polygon points="43.3,335.8 51.7,335.8 47.5,340.4" fill="#000"/>
<polygon points="53.3,335.8 61.7,335.8 57.5,340.4" fill="#000"/>
<polygon points="63.3,339 71.7,339 67.5,343.6" fill="#000"/>
<polygon points="73.3,339 81.7,339 77.5,343.6" fill="#000"/>
<polygon points="83.3,339 91.7,339 87.5,343.6" fill="#000"/>
<polygon points="93.3,339 101.7,339 97.5,343.6" fill="#000"/>
<polygon points="103.3,345.7 111.7,345.7 107.5,350.3" fill="#000"/>
<polygon points="113.3,358.7 121.7,358.7 117.5,363.3" fill="#000"/>
<polygon points="123.3,375.9 131.7,375.9 127.5,380.5" fill="#000"/>
<polygon points="133.3,384.7 141.7,384.7 137.5,389.3" fill="#000"/>
<polygon points="143.3,391.9 151.7,391.9 147.5,396.5" fill="#000"/>
<polygon points="153.3,401.9 161.7,401.9 157.5,406.5" fill="#000"/>
<polygon points="163.3,401.9 171.7,401.9 167.5,406.5" fill="#000"/>
<polygon points="173.3,401.9 181.7,401.9 177.5,406.5" fill="#000"/>
<polygon points="183.3,401.9 191.7,401.9 187.5,406.5" fill="#000"/>
<polygon points="193.3,401.9 201.7,401.9 197.5,406.5" fill="#000"/>
<polygon points="203.3,401.9 211.7,401.9 207.5,406.5" fill="#000"/>
<polygon points="213.3,401.9 221.7,401.9 217.5,406.5" fill="#000"/>
<polygon points="223.3,401.9 231.7,401.9 227.5,406.5" fill="#000"/>
<polygon points="233.3,401.9 241.7,401.9 237.5,406.5" fill="#000"/>
<polygon points="363.3,355.7 371.7,355.7 367.5,360.3" fill="#000"/>
<polygon points="373.3,371.8 381.7,371.8 377.5,376.4" fill="#000"/>
<polygon points="383.3,398.8 391.7,398.8 387.5,403.4" fill="#000"/>
<polygon points="393.3,417.7 401.7,417.7 397.5,422.3" fill="#000"/>
<polygon points="403.3,427.6 411.7,427.6 407.5,432.2" fill="#000"/>
<polygon points="413.3,434.9 421.7,434.9 417.5,439.5" fill="#000"/>
<polygon points="423.3,437.8 431.7,437.8 427.5,442.4" fill="#000"/>
<polygon points="433.3,437.8 441.7,437.8 437.5,442.4" fill="#000"/>
<polygon points="443.3,437.8 451.7,437.8 447.5,442.4" fill="#000"/>
<polygon points="453.3,437.8 461.7,437.8 457.5,442.4" fill="#000"/>
<polygon points="463.3,437.8 471.7,437.8 467.5,442.4" fill="#000"/>
<polygon points="473.3,437.8 481.7,437.8 477.5,442.4" fill="#000"/>
<polygon points="483.3,437.8 491.7,437.8 487.5,442.4" fill="#000"/>
<polygon points="493.3,437.8 501.7,437.8 497.5,442.4" fill="#000"/>
<polygon points="503.3,437.8 511.7,437.8 507.5,442.4" fill="#000"/>
<polygon points="513.3,437.8 521.7,437.8 517.5,442.4" fill="#000"/>
<polygon points="523.3,437.8 531.7,437.8 527.5,442.4" fill="#000"/>
<polygon points="533.3,437.8 541.7,437.8 537.5,442.4" fill="#000"/>
<polygon points="543.3,437.8 551.7,437.8 547.5,442.4" fill="#000"/>
<polygon points="553.3,437.8 561.7,437.8 557.5,442.4" fill="#000"/>
<polygon points="563.3,437.8 571.7,437.8 567.5,442.4" fill="#000"/>
<polygon points="573.3,437.8 581.7,437.8 577.5,442.4" fill="#000"/>
<polygon points="583.3,437.8 591.7,437.8 587.5,442.4" fill="#000"/>
<polygon points="593.3,437.8 601.7,437.8 597.5,442.4" fill="#000"/>
<polygon points="603.3,437.8 611.7,437.8 607.5,442.4" fill="#000"/>
<polygon points="613.3,437.8 621.7,437.8 617.5,442.4" fill="#000"/>
<polygon points="623.3,437.8 631.7,437.8 627.5,442.4" fill="#000"/>
<polygon points="633.3,437.8 641.7,437.8 637.5,442.4" fill="#000"/>
<polygon points="643.3,437.8 651.7,437.8 647.5,442.4" fill="#000"/>
<polygon points="653.3,437.8 661.7,437.8 657.5,442.4" fill="#000"/>
<polygon points="663.3,437.8 671.7,437.8 667.5,442.4" fill="#000"/>
<polygon points="673.3,437.8 681.7,437.8 677.5,442.4" fill="#000"/>
<polygon points="683.3,437.8 691.7,437.8 687.5,442.4" fill="#000"/>
<polygon points="693.3,437.8 701.7,437.8 697.5,442.4" fill="#000"/>
<polygon points="703.3,437.8 711.7,437.8 707.5,442.4" fill="#000"/>
<polygon points="713.3,437.8 721.7,437.8 717.5,442.4" fill="#000"/>
<polygon points="723.3,437.8 731.7,437.8 727.5,442.4" fill="#000"/>
<polygon points="733.3,437.8 741.7,437.8 737.5,442.4" fill="#000"/>
<polygon points="743.3,437.8 751.7,437.8 747.5,442.4" fill="#000"/>
<polygon points="753.3,437.8 761.7,437.8 757.5,442.4" fill="#000"/>
<polygon points="763.3,437.8 771.7,437.8 767.5,442.4" fill="#000"/>
<polygon points="773.3,437.8 781.7,437.8 777.5,442.4" fill="#000"/>
<polygon points="783.3,437.8 791.7,437.8 787.5,442.4" fill="#000"/>
<polygon points="793.3,437.8 801.7,437.8 797.5,442.4" fill="#000"/>
<polygon points="803.3,437.8 811.7,437.8 807.5,442.4" fill="#000"/>
<polygon points="813.3,437.8 821.7,437.8 817.5,442.4" fill="#000"/>
<polygon points="823.3,437.8 831.7,437.8 827.5,442.4" fill="#000"/>
<polygon points="833.3,437.8 841.7,437.8 837.5,442.4" fill="#000"/>
<polygon points="843.3,437.8 851.7,437.8 847.5,442.4" fill="#000"/>
<polygon points="853.3,437.8 861.7,437.8 857.5,442.4" fill="#000"/>
<polygon points="863.3,437.8 871.7,437.8 867.5,442.4" fill="#000"/>
<polygon points="873.3,437.8 881.7,437.8 877.5,442.4" fill="#000"/>
<polygon points="1183.3,244 1191.7,244 1187.5,248.6" fill="#000"/>
<polygon points="1193.3,253.9 1201.7,253.9 1197.5,258.5" fill="#000"/>
<polygon points="1203.3,292.9 1211.7,292.9 1207.5,297.5" fill="#000"/>
<polygon points="1213.3,330.1 1221.7,330.1 1217.5,334.7" fill="#000"/>
<polygon points="1223.3,359.1 1231.7,359.1 1227.5,363.7" fill="#000"/>
<polygon points="1233.3,375.9 1241.7,375.9 1237.5,380.5" fill="#000"/>
<polygon points="1243.3,375.9 1251.7,375.9 1247.5,380.5" fill="#000"/>
<polygon points="1253.3,375.9 1261.7,375.9 1257.5,380.5" fill="#000"/>
<polygon points="1263.3,375.9 1271.7,375.9 1267.5,380.5" fill="#000"/>
<polygon points="1273.3,375.9 1281.7,375.9 1277.5,380.5" fill="#000"/>
<polygon points="1283.3,375.9 1291.7,375.9 1287.5,380.5" fill="#000"/>
<polygon points="1293.3,375.9 1301.7,375.9 1297.5,380.5" fill="#000"/>
<polygon points="1303.3,375.9 1311.7,375.9 1307.5,380.5" fill="#000"/>
<polygon points="1313.3,375.9 1321.7,375.9 1317.5,380.5" fill="#000"/>
<polygon points="1323.3,375.9 1331.7,375.9 1327.5,380.5" fill="#000"/>
<polygon points="1333.3,375.9 1341.7,375.9 1337.5,380.5" fill="#000"/>
<polygon points="1343.3,375.9 1351.7,375.9 1347.5,380.5" fill="#000"/>
<polygon points="1353.3,375.9 1361.7,375.9 1357.5,380.5" fill="#000"/>
<polygon points="1363.3,375.9 1371.7,375.9 1367.5,380.5" fill="#000"/>
<polygon points="1373.3,375.9 1381.7,375.9 1377.5,380.5" fill="#000"/>
<polygon points="1383.3,375.9 1391.7,375.9 1387.5,380.5" fill="#000"/>
<polygon points="1393.3,375.9 1401.7,375.9 1397.5,380.5" fill="#000"/>
<polygon points="1403.3,375.9 1411.7,375.9 1407.5,380.5" fill="#000"/>
<polygon points="1413.3,375.9 1421.7,375.9 1417.5,380.5" fill="#000"/>
<polygon points="1423.3,375.9 1431.7,375.9 1427.5,380.5" fill="#000"/>
<polygon points="1433.3,375.9 1441.7,375.9 1437.5,380.5" fill="#000"/>
<polygon points="1443.3,375.9 1451.7,375.9 1447.5,380.5" fill="#000"/>
<polygon points="1993.3,338.9 2001.7,338.9 1997.5,343.5" fill="#000"/>
<polygon points="2003.3,342.7 2011.7,342.7 2007.5,347.3" fill="#000"/>
<polygon points="2013.3,355.8 2021.7,355.8 2017.5,360.4" fill="#000"/>
<polygon points="2023.3,368.8 2031.7,368.8 2027.5,373.4" fill="#000"/>
<polygon points="2033.3,375.7 2041.7,375.7 2037.5,380.3" fill="#000"/>
<polygon points="2043.3,378.2 2051.7,378.2 2047.5,382.8" fill="#000"/>
<polygon points="2053.3,378.2 2061.7,378.2 2057.5,382.8" fill="#000"/>
<polygon points="2063.3,378.2 2071.7,378.2 2067.5,382.8" fill="#000"/>
<polygon points="2073.3,378.2 2081.7,378.2 2077.5,382.8" fill="#000"/>
<polygon points="2083.3,378.2 2091.7,378.2 2087.5,382.8" fill="#000"/>
<polygon points="2093.3,378.2 2101.7,378.2 2097.5,382.8" fill="#000"/>
<polygon points="2103.3,378.2 2111.7,378.2 2107.5,382.8" fill="#000"/>
<polygon points="2113.3,378.2 2121.7,378.2 2117.5,382.8" fill="#000"/>
<polygon points="2123.3,378.2 2131.7,378.2 2127.5,382.8" fill="#000"/>
<polygon points="2133.3,378.2 2141.7,378.2 2137.5,382.8" fill="#000"/>
<polygon points="243.5,533.2 251.5,533.2 247.5,528.8" fill="#90ee90"/>
<polygon points="253.5,516.5 261.5,516.5 257.5,512.1" fill="#90ee90"/>
<polygon points="263.5,510.2 271.5,510.2 267.5,505.8" fill="#90ee90"/>
<polygon points="273.5,500.4 281.5,500.4 277.5,496" fill="#90ee90"/>
<polygon points="283.5,496.5 291.5,496.5 287.5,492.1" fill="#90ee90"/>
<polygon points="293.5,476.9 301.5,476.9 297.5,472.5" fill="#90ee90"/>
<polygon points="303.5,467.2 311.5,467.2 307.5,462.8" fill="#90ee90"/>
<polygon points="313.5,464.4 321.5,464.4 317.5,460" fill="#90ee90"/>
<polygon points="323.5,464.4 331.5,464.4 327.5,460" fill="#90ee90"/>
<polygon points="333.5,464.4 341.5,464.4 337.5,460" fill="#90ee90"/>
<polygon points="343.5,464.4 351.5,464.4 347.5,460" fill="#90ee90"/>
<polygon points="353.5,464.4 361.5,464.4 357.5,460" fill="#90ee90"/>
<polygon points="883.5,499.7 891.5,499.7 887.5,495.3" fill="#90ee90"/>
<polygon points="893.5,490.3 901.5,490.3 897.5,485.9" fill="#90ee90"/>
<polygon points="903.5,480.1 911.5,480.1 907.5,475.7" fill="#90ee90"/>
<polygon points="913.5,476.9 921.5,476.9 917.5,472.5" fill="#90ee90"/>
<polygon points="923.5,473.4 931.5,473.4 927.5,469" fill="#90ee90"/>
<polygon points="933.5,466.9 941.5,466.9 937.5,462.5" fill="#90ee90"/>
<polygon points="943.5,464 951.5,464 947.5,459.6" fill="#90ee90"/>
<polygon points="953.5,459.5 961.5,459.5 957.5,455.1" fill="#90ee90"/>
<polygon points="963.5,456.2 971.5,456.2 967.5,451.8" fill="#90ee90"/>
<polygon points="973.5,456.2 981.5,456.2 977.5,451.8" fill="#90ee90"/>
<polygon points="983.5,456.9 991.5,456.9 987.5,452.5" fill="#90ee90"/>
<polygon points="993.5,450.1 1001.5,450.1 997.5,445.7" fill="#90ee90"/>
<polygon points="1003.5,443.9 1011.5,443.9 1007.5,439.5" fill="#90ee90"/>
<polygon points="1013.5,431.2 1021.5,431.2 1017.5,426.8" fill="#90ee90"/>
<polygon points="1023.5,423.9 1031.5,423.9 1027.5,419.5" fill="#90ee90"/>
<polygon points="1033.5,421 1041.5,421 1037.5,416.6" fill="#90ee90"/>
<polygon points="1043.5,421 1051.5,421 1047.5,416.6" fill="#90ee90"/>
<polygon points="1053.5,421 1061.5,421 1057.5,416.6" fill="#90ee90"/>
<polygon points="1063.5,421 1071.5,421 1067.5,416.6" fill="#90ee90"/>
<polygon points="1073.5,421 1081.5,421 1077.5,416.6" fill="#90ee90"/>
<polygon points="1083.5,421 1091.5,421 1087.5,416.6" fill="#90ee90"/>
<polygon points="1093.5,421 1101.5,421 1097.5,416.6" fill="#90ee90"/>
<polygon points="1103.5,421 1111.5,421 1107.5,416.6" fill="#90ee90"/>
<polygon points="1113.5,421 1121.5,421 1117.5,416.6" fill="#90ee90"/>
<polygon points="1123.5,421 1131.5,421 1127.5,416.6" fill="#90ee90"/>
<polygon points="1133.5,421 1141.5,421 1137.5,416.6" fill="#90ee90"/>
<polygon points="1143.5,421 1151.5,421 1147.5,416.6" fill="#90ee90"/>
<polygon points="1153.5,421 1161.5,421 1157.5,416.6" fill="#90ee90"/>
<polygon points="1163.5,421 1171.5,421 1167.5,416.6" fill="#90ee90"/>
<polygon points="1173.5,421 1181.5,421 1177.5,416.6" fill="#90ee90"/>
<polygon points="1493.5,454.2 1501.5,454.2 1497.5,449.8" fill="#90ee90"/>
<polygon points="1503.5,443.9 1511.5,443.9 1507.5,439.5" fill="#90ee90"/>
<polygon points="1513.5,441 1521.5,441 1517.5,436.6" fill="#90ee90"/>
<polygon points="1523.5,441 1531.5,441 1527.5,436.6" fill="#90ee90"/>
<polygon points="1533.5,441 1541.5,441 1537.5,436.6" fill="#90ee90"/>
<polygon points="1543.5,441 1551.5,441 1547.5,436.6" fill="#90ee90"/>
<polygon points="1553.5,441 1561.5,441 1557.5,436.6" fill="#90ee90"/>
<polygon points="1563.5,441 1571.5,441 1567.5,436.6" fill="#90ee90"/>
<polygon points="1573.5,441 1581.5,441 1577.5,436.6" fill="#90ee90"/>
<polygon points="1583.5,441 1591.5,441 1587.5,436.6" fill="#90ee90"/>
<polygon points="1593.5,441 1601.5,441 1597.5,436.6" fill="#90ee90"/>
<polygon points="1603.5,441 1611.5,441 1607.5,436.6" fill="#90ee90"/>
<polygon points="1613.5,441 1621.5,441 1617.5,436.6" fill="#90ee90"/>
<polygon points="1623.5,437 1631.5,437 1627.5,432.6" fill="#90ee90"/>
<polygon points="1633.5,433.9 1641.5,433.9 1637.5,429.5" fill="#90ee90"/>
<polygon points="1643.5,433.9 1651.5,433.9 1647.5,429.5" fill="#90ee90"/>
<polygon points="1653.5,431 1661.5,431 1657.5,426.6" fill="#90ee90"/>
<polygon points="1663.5,427 1671.5,427 1667.5,422.6" fill="#90ee90"/>
<polygon points="1673.5,427 1681.5,427 1677.5,422.6" fill="#90ee90"/>
<polygon points="1683.5,423.7 1691.5,423.7 1687.5,419.3" fill="#90ee90"/>
<polygon points="1693.5,420.7 1701.5,420.7 1697.5,416.3" fill="#90ee90"/>
<polygon points="1703.5,420.7 1711.5,420.7 1707.5,416.3" fill="#90ee90"/>
<polygon points="1713.5,420.7 1721.5,420.7 1717.5,416.3" fill="#90ee90"/>
<polygon points="1723.5,420.7 1731.5,420.7 1727.5,416.3" fill="#90ee90"/>
<polygon points="1733.5,413.9 1741.5,413.9 1737.5,409.5" fill="#90ee90"/>
<polygon points="1743.5,410.7 1751.5,410.7 1747.5,406.3" fill="#90ee90"/>
<polygon points="1753.5,407.6 1761.5,407.6 1757.5,403.2" fill="#90ee90"/>
<polygon points="1763.5,403.8 1771.5,403.8 1767.5,399.4" fill="#90ee90"/>
<polygon points="1773.5,403.8 1781.5,403.8 1777.5,399.4" fill="#90ee90"/>
<polygon points="1783.5,403.8 1791.5,403.8 1787.5,399.4" fill="#90ee90"/>
<polygon points="1793.5,403.8 1801.5,403.8 1797.5,399.4" fill="#90ee90"/>
<polygon points="1803.5,403.8 1811.5,403.8 1807.5,399.4" fill="#90ee90"/>
<polygon points="1813.5,403.8 1821.5,403.8 1817.5,399.4" fill="#90ee90"/>
<polygon points="1823.5,403.8 1831.5,403.8 1827.5,399.4" fill="#90ee90"/>
<polygon points="1833.5,403.8 1841.5,403.8 1837.5,399.4" fill="#90ee90"/>
<polygon points="1843.5,400.7 1851.5,400.7 1847.5,396.3" fill="#90ee90"/>
<polygon points="1853.5,397.8 1861.5,397.8 1857.5,393.4" fill="#90ee90"/>
<polygon points="1863.5,397.8 1871.5,397.8 1867.5,393.4" fill="#90ee90"/>
<polygon points="1873.5,397.8 1881.5,397.8 1877.5,393.4" fill="#90ee90"/>
<polygon points="1883.5,397.8 1891.5,397.8 1887.5,393.4" fill="#90ee90"/>
<polygon points="1893.5,397.8 1901.5,397.8 1897.5,393.4" fill="#90ee90"/>
<polygon points="1903.5,397.8 1911.5,397.8 1907.5,393.4" fill="#90ee90"/>
<polygon points="1913.5,397.8 1921.5,397.8 1917.5,393.4" fill="#90ee90"/>
<polygon points="1923.5,397.8 1931.5,397.8 1927.5,393.4" fill="#90ee90"/>
<polygon points="1933.5,397.8 1941.5,397.8 1937.5,393.4" fill="#90ee90"/>
<polygon points="1943.5,397.8 1951.5,397.8 1947.5,393.4" fill="#90ee90"/>
<polygon points="1953.5,397.8 1961.5,397.8 1957.5,393.4" fill="#90ee90"/>
<polygon points="1963.5,397.8 1971.5,397.8 1967.5,393.4" fill="#90ee90"/>
<polygon points="1973.5,397.8 1981.5,397.8 1977.5,393.4" fill="#90ee90"/>
<polygon points="1983.5,397.8 1991.5,397.8 1987.5,393.4" fill="#90ee90"/>
<polygon points="2143.5,552.2 2151.5,552.2 2147.5,547.8" fill="#90ee90"/>
<polygon points="2153.5,522.9 2161.5,522.9 2157.5,518.5" fill="#90ee90"/>
<polygon points="2163.5,480 2171.5,480 2167.5,475.6" fill="#90ee90"/>
<polygon points="2173.5,436.7 2181.5,436.7 2177.5,432.3" fill="#90ee90"/>
<polygon points="2183.5,404.1 2191.5,404.1 2187.5,399.7" fill="#90ee90"/>
<polygon points="2193.5,374.8 2201.5,374.8 2197.5,370.4" fill="#90ee90"/>
<polygon points="2203.5,331.9 2211.5,331.9 2207.5,327.5" fill="#90ee90"/>
<polygon points="2213.5,295.8 2221.5,295.8 2217.5,291.4" fill="#90ee90"/>
<polygon points="2223.5,269.9 2231.5,269.9 2227.5,265.5" fill="#90ee90"/>
<polygon points="2233.5,255.7 2241.5,255.7 2237.5,251.3" fill="#90ee90"/>
<polygon points="2243.5,246.7 2251.5,246.7 2247.5,242.3" fill="#90ee90"/>
<polygon points="2253.5,246.7 2261.5,246.7 2257.5,242.3" fill="#90ee90"/>
<polygon points="2263.5,246.7 2271.5,246.7 2267.5,242.3" fill="#90ee90"/>
<polygon points="2273.5,246.7 2281.5,246.7 2277.5,242.3" fill="#90ee90"/>
<polygon points="2283.5,246.7 2291.5,246.7 2287.5,242.3" fill="#90ee90"/>
<polygon points="2293.5,246.7 2301.5,246.7 2297.5,242.3" fill="#90ee90"/>
<polygon points="2303.5,246.7 2311.5,246.7 2307.5,242.3" fill="#90ee90"/>
<polygon points="2313.5,246.7 2321.5,246.7 2317.5,242.3" fill="#90ee90"/>
<polygon points="2323.5,246.7 2331.5,246.7 2327.5,242.3" fill="#90ee90"/>
<polygon points="2333.5,246.7 2341.5,246.7 2337.5,242.3" fill="#90ee90"/>
<polygon points="2343.5,246.7 2351.5,246.7 2347.5,242.3" fill="#90ee90"/>
<polygon points="2353.5,246.7 2361.5,246.7 2357.5,242.3" fill="#90ee90"/>
<polygon points="2363.5,246.7 2371.5,246.7 2367.5,242.3" fill="#90ee90"/>
<polygon points="2373.5,246.7 2381.5,246.7 2377.5,242.3" fill="#90ee90"/>
<polygon points="2383.5,246.7 2391.5,246.7 2387.5,242.3" fill="#90ee90"/>
<polygon points="2393.5,246.7 2401.5,246.7 2397.5,242.3" fill="#90ee90"/>
<polygon points="2403.5,246.7 2411.5,246.7 2407.5,242.3" fill="#90ee90"/>
<polygon points="2413.5,246.7 2421.5,246.7 2417.5,242.3" fill="#90ee90"/>
<polygon points="2423.5,246.7 2431.5,246.7 2427.5,242.3" fill="#90ee90"/>
<polygon points="2433.5,246.7 2441.5,246.7 2437.5,242.3" fill="#90ee90"/>
<polygon points="2443.5,246.7 2451.5,246.7 2447.5,242.3" fill="#90ee90"/>
<polygon points="2453.5,246.7 2461.5,246.7 2457.5,242.3" fill="#90ee90"/>
<polygon points="2463.5,246.7 2471.5,246.7 2467.5,242.3" fill="#90ee90"/>
<circle cx="1088.5" cy="383.1" r="3.2" fill="#007000"/>
<circle cx="1128.5" cy="425.7" r="3.2" fill="#007000"/>
<circle cx="1148.5" cy="413" r="3.2" fill="#007000"/>
<circle cx="1158.5" cy="408.9" r="3.2" fill="#007000"/>
<circle cx="2137.5" cy="517.5" r="3.2" fill="#007000"/>
<circle cx="1288.5" cy="418.8" r="3.2" fill="#ff0000"/>
<circle cx="2078.5" cy="392.7" r="3.2" fill="#ff0000"/>
<rect x="844.5" y="486" width="6" height="4" fill="#006400"/>
<rect x="2164.5" y="331.4" width="6" height="4" fill="#006400"/>
<polygon points="365.3,336 369.7,336 369.7,351 373,351 367.5,357 362,351 365.3,351" fill="#000"/>
<polygon points="1185.3,224 1189.7,224 1189.7,238.5 1193,238.5 1187.5,244.5 1182,238.5 1185.3,238.5" fill="#000"/>
<polygon points="1995.3,319 1999.7,319 1999.7,335.2 2003,335.2 1997.5,341.2 1992,335.2 1995.3,335.2" fill="#000"/>
<polygon points="247.5,531 252.5,537 250,537 250,552 245,552 245,537 242.5,537" fill="#90ee90" stroke="#000" stroke-width="1"/>
<polygon points="887.5,497.5 892.5,503.5 890,503.5 890,518.7 885,518.7 885,503.5 882.5,503.5" fill="#90ee90" stroke="#000" stroke-width="1"/>
<polygon points="2147.5,551 2152.5,557 2150,557 2150,572 2145,572 2145,557 2142.5,557" fill="#90ee90" stroke="#000" stroke-width="1"/>
<text x="2118" y="179" font-size="11" fill="#0000ff" font-weight="normal" font-style="normal" text-anchor="start">T5</text>
<text x="2118" y="220" font-size="11" fill="#00e0e0" font-weight="normal" font-style="normal" text-anchor="start">T4</text>
<text x="2118" y="262" font-size="11" fill="#006400" font-weight="normal" font-style="normal" text-anchor="start">T3</text>
<text x="2118" y="304" font-size="11" fill="#ff0000" font-weight="normal" font-style="normal" text-anchor="start">T2</text>
<text x="2118" y="346" font-size="11" fill="#e8e800" font-weight="normal" font-style="normal" text-anchor="start">T1</text>
<g shape-rendering="crispEdges">
<rect x="0" y="710" width="2560" height="1" fill="#000"/>
<rect x="0" y="931" width="2560" height="1" fill="#000"/>
<rect x="0" y="1152" width="2560" height="1" fill="#000"/>
<rect x="0" y="1349" width="2485" height="1" fill="#000"/>
<rect x="2484" y="52" width="1" height="1298" fill="#000"/>
<rect x="77" y="1350" width="1" height="5" fill="#000"/>
<rect x="157" y="1350" width="1" height="5" fill="#000"/>
<rect x="237" y="1350" width="1" height="5" fill="#000"/>
<rect x="317" y="1350" width="1" height="5" fill="#000"/>
<rect x="397" y="1350" width="1" height="5" fill="#000"/>
<rect x="477" y="1350" width="1" height="5" fill="#000"/>
<rect x="557" y="1350" width="1" height="5" fill="#000"/>
<rect x="637" y="1350" width="1" height="5" fill="#000"/>
<rect x="717" y="1350" width="1" height="5" fill="#000"/>
<rect x="797" y="1350" width="1" height="5" fill="#000"/>
<rect x="877" y="1350" width="1" height="5" fill="#000"/>
<rect x="957" y="1350" width="1" height="5" fill="#000"/>
<rect x="1037" y="1350" width="1" height="5" fill="#000"/>
<rect x="1117" y="1350" width="1" height="5" fill="#000"/>
<rect x="1197" y="1350" width="1" height="5" fill="#000"/>
<rect x="1277" y="1350" width="1" height="5" fill="#000"/>
<rect x="1357" y="1350" width="1" height="5" fill="#000"/>
<rect x="1437" y="1350" width="1" height="5" fill="#000"/>
<rect x="1517" y="1350" width="1" height="5" fill="#000"/>
<rect x="1597" y="1350" width="1" height="5" fill="#000"/>
<rect x="1677" y="1350" width="1" height="5" fill="#000"/>
<rect x="1757" y="1350" width="1" height="5" fill="#000"/>
<rect x="1837" y="1350" width="1" height="5" fill="#000"/>
<rect x="1917" y="1350" width="1" height="5" fill="#000"/>
<rect x="1997" y="1350" width="1" height="5" fill="#000"/>
<rect x="2077" y="1350" width="1" height="5" fill="#000"/>
<rect x="2157" y="1350" width="1" height="5" fill="#000"/>
<rect x="2237" y="1350" width="1" height="5" fill="#000"/>
<rect x="2317" y="1350" width="1" height="5" fill="#000"/>
<rect x="2397" y="1350" width="1" height="5" fill="#000"/>
<rect x="2477" y="1350" width="1" height="5" fill="#000"/>
</g>
<text x="77.5" y="1366" font-size="11" fill="#000" font-weight="normal" font-style="normal" text-anchor="middle">14:00</text>
<text x="157.5" y="1366" font-size="11" fill="#000" font-weight="normal" font-style="normal" text-anchor="middle">16:00</text>
<text x="237.5" y="1366" font-size="11" fill="#000" font-weight="normal" font-style="normal" text-anchor="middle">18:00</text>
<text x="317.5" y="1366" font-size="11" fill="#000" font-weight="normal" font-style="normal" text-anchor="middle">20:00</text>
<text x="397.5" y="1366" font-size="11" fill="#000" font-weight="normal" font-style="normal" text-anchor="middle">22:00</text>
<text x="477.5" y="1366" font-size="11" fill="#000" font-weight="normal" font-style="normal" text-anchor="middle">1/9</text>
<text x="557.5" y="1366" font-size="11" fill="#000" font-weight="normal" font-style="normal" text-anchor="middle">02:00</text>
<text x="637.5" y="1366" font-size="11" fill="#000" font-weight="normal" font-style="normal" text-anchor="middle">04:00</text>
<text x="717.5" y="1366" font-size="11" fill="#000" font-weight="normal" font-style="normal" text-anchor="middle">06:00</text>
<text x="797.5" y="1366" font-size="11" fill="#000" font-weight="normal" font-style="normal" text-anchor="middle">08:00</text>
<text x="877.5" y="1366" font-size="11" fill="#000" font-weight="normal" font-style="normal" text-anchor="middle">10:00</text>
<text x="957.5" y="1366" font-size="11" fill="#000" font-weight="normal" font-style="normal" text-anchor="middle">12:00</text>
<text x="1037.5" y="1366" font-size="11" fill="#000" font-weight="normal" font-style="normal" text-anchor="middle">14:00</text>
<text x="1117.5" y="1366" font-size="11" fill="#000" font-weight="normal" font-style="normal" text-anchor="middle">16:00</text>
<text x="1197.5" y="1366" font-size="11" fill="#000" font-weight="normal" font-style="normal" text-anchor="middle">18:00</text>
<text x="1277.5" y="1366" font-size="11" fill="#000" font-weight="normal" font-style="normal" text-anchor="middle">20:00</text>
<text x="1357.5" y="1366" font-size="11" fill="#000" font-weight="normal" font-style="normal" text-anchor="middle">22:00</text>
<text x="1437.5" y="1366" font-size="11" fill="#000" font-weight="normal" font-style="normal" text-anchor="middle">1/10</text>
<text x="1517.5" y="1366" font-size="11" fill="#000" font-weight="normal" font-style="normal" text-anchor="middle">02:00</text>
<text x="1597.5" y="1366" font-size="11" fill="#000" font-weight="normal" font-style="normal" text-anchor="middle">04:00</text>
<text x="1677.5" y="1366" font-size="11" fill="#000" font-weight="normal" font-style="normal" text-anchor="middle">06:00</text>
<text x="1757.5" y="1366" font-size="11" fill="#000" font-weight="normal" font-style="normal" text-anchor="middle">08:00</text>
<text x="1837.5" y="1366" font-size="11" fill="#000" font-weight="normal" font-style="normal" text-anchor="middle">10:00</text>
<text x="1917.5" y="1366" font-size="11" fill="#000" font-weight="normal" font-style="normal" text-anchor="middle">12:00</text>
<text x="1997.5" y="1366" font-size="11" fill="#000" font-weight="normal" font-style="normal" text-anchor="middle">14:00</text>
<text x="2077.5" y="1366" font-size="11" fill="#000" font-weight="normal" font-style="normal" text-anchor="middle">16:00</text>
<text x="2157.5" y="1366" font-size="11" fill="#000" font-weight="normal" font-style="normal" text-anchor="middle">18:00</text>
<text x="2237.5" y="1366" font-size="11" fill="#000" font-weight="normal" font-style="normal" text-anchor="middle">20:00</text>
<text x="2317.5" y="1366" font-size="11" fill="#000" font-weight="normal" font-style="normal" text-anchor="middle">22:00</text>
<text x="2397.5" y="1366" font-size="11" fill="#000" font-weight="normal" font-style="normal" text-anchor="middle">1/11</text>
<text x="2477.5" y="1366" font-size="11" fill="#000" font-weight="normal" font-style="normal" text-anchor="middle">02:00</text>
<g shape-rendering="crispEdges">
<rect x="2485" y="71" width="6" height="1" fill="#000"/>
<rect x="2485" y="103" width="6" height="1" fill="#000"/>
<rect x="2485" y="136" width="6" height="1" fill="#000"/>
<rect x="2485" y="169" width="6" height="1" fill="#000"/>
<rect x="2485" y="202" width="6" height="1" fill="#000"/>
<rect x="2485" y="235" width="6" height="1" fill="#000"/>
<rect x="2485" y="268" width="6" height="1" fill="#000"/>
<rect x="2485" y="301" width="6" height="1" fill="#000"/>
<rect x="2485" y="334" width="6" height="1" fill="#000"/>
<rect x="2485" y="367" width="6" height="1" fill="#000"/>
<rect x="2485" y="399" width="6" height="1" fill="#000"/>
<rect x="2485" y="432" width="6" height="1" fill="#000"/>
<rect x="2485" y="465" width="6" height="1" fill="#000"/>
<rect x="2485" y="498" width="6" height="1" fill="#000"/>
<rect x="2485" y="531" width="6" height="1" fill="#000"/>
<rect x="2485" y="564" width="6" height="1" fill="#000"/>
<rect x="2485" y="597" width="6" height="1" fill="#000"/>
<rect x="2485" y="630" width="6" height="1" fill="#000"/>
<rect x="2485" y="663" width="6" height="1" fill="#000"/>
<rect x="2485" y="695" width="6" height="1" fill="#000"/>
<rect x="2485" y="725" width="6" height="1" fill="#000"/>
<rect x="2485" y="749" width="6" height="1" fill="#000"/>
<rect x="2485" y="774" width="6" height="1" fill="#000"/>
<rect x="2485" y="798" width="6" height="1" fill="#000"/>
<rect x="2485" y="822" width="6" height="1" fill="#000"/>
<rect x="2485" y="847" width="6" height="1" fill="#000"/>
<rect x="2485" y="871" width="6" height="1" fill="#000"/>
<rect x="2485" y="896" width="6" height="1" fill="#000"/>
<rect x="2485" y="920" width="6" height="1" fill="#000"/>
<rect x="2485" y="946" width="6" height="1" fill="#000"/>
<rect x="2485" y="968" width="6" height="1" fill="#000"/>
<rect x="2485" y="989" width="6" height="1" fill="#000"/>
<rect x="2485" y="1011" width="6" height="1" fill="#000"/>
<rect x="2485" y="1032" width="6" height="1" fill="#000"/>
<rect x="2485" y="1054" width="6" height="1" fill="#000"/>
<rect x="2485" y="1075" width="6" height="1" fill="#000"/>
<rect x="2485" y="1097" width="6" height="1" fill="#000"/>
<rect x="2485" y="1118" width="6" height="1" fill="#000"/>
<rect x="2485" y="1140" width="6" height="1" fill="#000"/>
<rect x="2485" y="1162" width="6" height="1" fill="#000"/>
<rect x="2485" y="1198" width="6" height="1" fill="#000"/>
<rect x="2485" y="1234" width="6" height="1" fill="#000"/>
<rect x="2485" y="1270" width="6" height="1" fill="#000"/>
<rect x="2485" y="1307" width="6" height="1" fill="#000"/>
<rect x="2485" y="1343" width="6" height="1" fill="#000"/>
</g>
<text x="2492" y="76" font-size="11" fill="#000" font-weight="normal" font-style="normal" text-anchor="start">1,3700</text>
<text x="2492" y="108" font-size="11" fill="#000" font-weight="normal" font-style="normal" text-anchor="start">1,3690</text>
<text x="2492" y="141" font-size="11" fill="#000" font-weight="normal" font-style="normal" text-anchor="start">1,3680</text>
<text x="2492" y="174" font-size="11" fill="#000" font-weight="normal" font-style="normal" text-anchor="start">1,3670</text>
<text x="2492" y="207" font-size="11" fill="#000" font-weight="normal" font-style="normal" text-anchor="start">1,3660</text>
<text x="2492" y="240" font-size="11" fill="#000" font-weight="normal" font-style="normal" text-anchor="start">1,3650</text>
<text x="2492" y="273" font-size="11" fill="#000" font-weight="normal" font-style="normal" text-anchor="start">1,3640</text>
<text x="2492" y="306" font-size="11" fill="#000" font-weight="normal" font-style="normal" text-anchor="start">1,3630</text>
<text x="2492" y="339" font-size="11" fill="#000" font-weight="normal" font-style="normal" text-anchor="start">1,3620</text>
<text x="2492" y="372" font-size="11" fill="#000" font-weight="normal" font-style="normal" text-anchor="start">1,3610</text>
<text x="2492" y="404" font-size="11" fill="#000" font-weight="normal" font-style="normal" text-anchor="start">1,3600</text>
<text x="2492" y="437" font-size="11" fill="#000" font-weight="normal" font-style="normal" text-anchor="start">1,3590</text>
<text x="2492" y="470" font-size="11" fill="#000" font-weight="normal" font-style="normal" text-anchor="start">1,3580</text>
<text x="2492" y="503" font-size="11" fill="#000" font-weight="normal" font-style="normal" text-anchor="start">1,3570</text>
<text x="2492" y="536" font-size="11" fill="#000" font-weight="normal" font-style="normal" text-anchor="start">1,3560</text>
<text x="2492" y="569" font-size="11" fill="#000" font-weight="normal" font-style="normal" text-anchor="start">1,3550</text>
<text x="2492" y="602" font-size="11" fill="#000" font-weight="normal" font-style="normal" text-anchor="start">1,3540</text>
<text x="2492" y="635" font-size="11" fill="#000" font-weight="normal" font-style="normal" text-anchor="start">1,3530</text>
<text x="2492" y="668" font-size="11" fill="#000" font-weight="normal" font-style="normal" text-anchor="start">1,3520</text>
<text x="2492" y="700" font-size="11" fill="#000" font-weight="normal" font-style="normal" text-anchor="start">1,3510</text>
<text x="2492" y="730" font-size="11" fill="#000" font-weight="normal" font-style="normal" text-anchor="start">0,005</text>
<text x="2492" y="754" font-size="11" fill="#000" font-weight="normal" font-style="normal" text-anchor="start">0,004</text>
<text x="2492" y="779" font-size="11" fill="#000" font-weight="normal" font-style="normal" text-anchor="start">0,003</text>
<text x="2492" y="803" font-size="11" fill="#000" font-weight="normal" font-style="normal" text-anchor="start">0,002</text>
<text x="2492" y="827" font-size="11" fill="#000" font-weight="normal" font-style="normal" text-anchor="start">0,001</text>
<text x="2492" y="852" font-size="11" fill="#000" font-weight="normal" font-style="normal" text-anchor="start">0</text>
<text x="2492" y="876" font-size="11" fill="#000" font-weight="normal" font-style="normal" text-anchor="start">-0,001</text>
<text x="2492" y="901" font-size="11" fill="#000" font-weight="normal" font-style="normal" text-anchor="start">-0,002</text>
<text x="2492" y="925" font-size="11" fill="#000" font-weight="normal" font-style="normal" text-anchor="start">-0,003</text>
<text x="2492" y="951" font-size="11" fill="#000" font-weight="normal" font-style="normal" text-anchor="start">0,0015</text>
<text x="2492" y="973" font-size="11" fill="#000" font-weight="normal" font-style="normal" text-anchor="start">0,001</text>
<text x="2492" y="994" font-size="11" fill="#000" font-weight="normal" font-style="normal" text-anchor="start">0,0005</text>
<text x="2492" y="1016" font-size="11" fill="#000" font-weight="normal" font-style="normal" text-anchor="start">0</text>
<text x="2492" y="1037" font-size="11" fill="#000" font-weight="normal" font-style="normal" text-anchor="start">-0,0005</text>
<text x="2492" y="1059" font-size="11" fill="#000" font-weight="normal" font-style="normal" text-anchor="start">-0,001</text>
<text x="2492" y="1080" font-size="11" fill="#000" font-weight="normal" font-style="normal" text-anchor="start">-0,0015</text>
<text x="2492" y="1102" font-size="11" fill="#000" font-weight="normal" font-style="normal" text-anchor="start">-0,002</text>
<text x="2492" y="1123" font-size="11" fill="#000" font-weight="normal" font-style="normal" text-anchor="start">-0,0025</text>
<text x="2492" y="1145" font-size="11" fill="#000" font-weight="normal" font-style="normal" text-anchor="start">-0,003</text>
<text x="2492" y="1167" font-size="11" fill="#000" font-weight="normal" font-style="normal" text-anchor="start">1</text>
<text x="2492" y="1203" font-size="11" fill="#000" font-weight="normal" font-style="normal" text-anchor="start">0,8</text>
<text x="2492" y="1239" font-size="11" fill="#000" font-weight="normal" font-style="normal" text-anchor="start">0,6</text>
<text x="2492" y="1275" font-size="11" fill="#000" font-weight="normal" font-style="normal" text-anchor="start">0,4</text>
<text x="2492" y="1312" font-size="11" fill="#000" font-weight="normal" font-style="normal" text-anchor="start">0,2</text>
<text x="2492" y="1348" font-size="11" fill="#000" font-weight="normal" font-style="normal" text-anchor="start">0</text>
<polygon points="2486,132 2492,125.5 2527.5,125.5 2527.5,138.5 2492,138.5" fill="#fff" stroke="#000" stroke-width="1"/>
<text x="2493.5" y="136.5" font-size="11.5" fill="#000" font-weight="normal" font-style="normal" text-anchor="start" textLength="32" lengthAdjust="spacingAndGlyphs">1,3681</text>
<polygon points="2486,172.5 2492,166 2527.5,166 2527.5,179 2492,179" fill="#0000ff" stroke="#000" stroke-width="1"/>
<text x="2493.5" y="177" font-size="11.5" fill="#fff" font-weight="normal" font-style="normal" text-anchor="start" textLength="32" lengthAdjust="spacingAndGlyphs">1,3669</text>
<polygon points="2486,163 2492,156.5 2527.5,156.5 2527.5,169.5 2492,169.5" fill="#000" stroke="#000" stroke-width="1"/>
<text x="2493.5" y="167.5" font-size="11.5" fill="#fff" font-weight="normal" font-style="normal" text-anchor="start" textLength="32" lengthAdjust="spacingAndGlyphs">1,3672</text>
<polygon points="2486,182.4 2492,175.9 2527.5,175.9 2527.5,188.9 2492,188.9" fill="#000" stroke="#000" stroke-width="1"/>
<text x="2493.5" y="186.9" font-size="11.5" fill="#fff" font-weight="normal" font-style="normal" text-anchor="start" textLength="32" lengthAdjust="spacingAndGlyphs">1,3666</text>
<polygon points="2486,215 2492,208.5 2527.5,208.5 2527.5,221.5 2492,221.5" fill="#00ffff" stroke="#000" stroke-width="1"/>
<text x="2493.5" y="219.5" font-size="11.5" fill="#000" font-weight="normal" font-style="normal" text-anchor="start" textLength="32" lengthAdjust="spacingAndGlyphs">1,3656</text>
<polygon points="2486,242 2492,235.5 2527.5,235.5 2527.5,248.5 2492,248.5" fill="#90ee90" stroke="#000" stroke-width="1"/>
<text x="2493.5" y="246.5" font-size="11.5" fill="#000" font-weight="normal" font-style="normal" text-anchor="start" textLength="32" lengthAdjust="spacingAndGlyphs">1,3648</text>
<polygon points="2486,257 2492,250.5 2527.5,250.5 2527.5,263.5 2492,263.5" fill="#006400" stroke="#000" stroke-width="1"/>
<text x="2493.5" y="261.5" font-size="11.5" fill="#fff" font-weight="normal" font-style="normal" text-anchor="start" textLength="32" lengthAdjust="spacingAndGlyphs">1,3643</text>
<polygon points="2486,299 2492,292.5 2527.5,292.5 2527.5,305.5 2492,305.5" fill="#ff0000" stroke="#000" stroke-width="1"/>
<text x="2493.5" y="303.5" font-size="11.5" fill="#fff" font-weight="normal" font-style="normal" text-anchor="start" textLength="32" lengthAdjust="spacingAndGlyphs">1,3630</text>
<polygon points="2486,341.3 2492,334.8 2527.5,334.8 2527.5,347.8 2492,347.8" fill="#ffff00" stroke="#000" stroke-width="1"/>
<text x="2493.5" y="345.8" font-size="11.5" fill="#000" font-weight="normal" font-style="normal" text-anchor="start" textLength="32" lengthAdjust="spacingAndGlyphs">1,3618</text>
<rect x="0" y="47" width="957" height="15" fill="#fff"/>
<text x="3" y="63" font-size="11" fill="#000" font-weight="normal" font-style="normal" text-anchor="start">Flux Broadhead($EURUSD (15 Min)), FluxFlashbackMarkers(AMACD,5, 20 2-periods), FPC 4.2(20, 0,2, 7:00), FluxTCM(AMACD,5, 20 2-weeks), Flux Trend Stalker Elite($EURUSD (15 Min),True)</text>
<rect x="6" y="73" width="125" height="49" fill="#fff"/>
<text x="8" y="83" font-size="11" fill="#000" font-weight="normal" font-style="normal" text-anchor="start">FluxFlashbackHistograms input data began at: 21.11.2013 03:30:00</text>
<text x="11" y="119" font-size="11" fill="#000" font-weight="normal" font-style="normal" text-anchor="start">Session template: Forex</text>
<text x="3" y="732" font-size="11" fill="#000" font-weight="normal" font-style="normal" text-anchor="start">FluxFlashbackHisto(AMACD,5, 20 2-periods)</text>
<rect x="1" y="818" width="174" height="18" fill="#fff"/>
<text x="2" y="832" font-size="11" fill="#000" font-weight="normal" font-style="normal" text-anchor="start" textLength="172" lengthAdjust="spacingAndGlyphs">Histo being used: января 01, 1:45</text>
<text x="137" y="898" font-size="11" fill="#000" font-weight="normal" font-style="normal" text-anchor="middle">15:30</text>
<text x="297" y="819" font-size="11" fill="#000" font-weight="normal" font-style="normal" text-anchor="middle">19:30</text>
<text x="417" y="903" font-size="11" fill="#000" font-weight="normal" font-style="normal" text-anchor="middle">22:30</text>
<text x="2037" y="881" font-size="11" fill="#000" font-weight="normal" font-style="normal" text-anchor="middle">15:00</text>
<text x="2236" y="732" font-size="11" fill="#000" font-weight="normal" font-style="normal" text-anchor="middle">20:00</text>
<text x="3" y="952" font-size="11" fill="#000" font-weight="normal" font-style="normal" text-anchor="start">FluxHisto(AMACD,5, 20 2-wks)</text>
<text x="117" y="1083" font-size="11" fill="#000" font-weight="normal" font-style="normal" text-anchor="middle">15:00</text>
<text x="307" y="967" font-size="11" fill="#000" font-weight="normal" font-style="normal" text-anchor="middle">19:45</text>
<text x="417" y="1062" font-size="11" fill="#000" font-weight="normal" font-style="normal" text-anchor="middle">22:30</text>
<text x="557" y="1111" font-size="11" fill="#000" font-weight="normal" font-style="normal" text-anchor="middle">2:00</text>
<text x="1227" y="1140" font-size="11" fill="#000" font-weight="normal" font-style="normal" text-anchor="middle">18:45</text>
<text x="3" y="1174" font-size="11" fill="#000" font-weight="normal" font-style="normal" text-anchor="start">Flux Reverse Radar v2.3($EURUSD (15 Min),3)</text>
<text x="1242" y="1257" font-size="11" fill="#000" font-weight="normal" font-style="normal" text-anchor="middle">Increase chart margin (Chart Properties) to see the FluxReverseRadar</text>
<text x="3" y="1347" font-size="11" fill="#000" font-weight="normal" font-style="normal" text-anchor="start">© 2014 NinjaTrader, LLC</text>
<defs><linearGradient id="gTitle" x1="0" y1="0" x2="0" y2="1"><stop offset="0" stop-color="#b9c8d7"/><stop offset="1" stop-color="#d7e5f2"/></linearGradient><linearGradient id="gTool" x1="0" y1="0" x2="0" y2="1"><stop offset="0" stop-color="#fdfdfd"/><stop offset="1" stop-color="#eeeeee"/></linearGradient><linearGradient id="gBtn" x1="0" y1="0" x2="0" y2="1"><stop offset="0" stop-color="#f3f3f3"/><stop offset="0.5" stop-color="#ebebeb"/><stop offset="0.5" stop-color="#dddddd"/><stop offset="1" stop-color="#cfcfcf"/></linearGradient><linearGradient id="gWBtn" x1="0" y1="0" x2="0" y2="1"><stop offset="0" stop-color="#c6d3e1"/><stop offset="1" stop-color="#d3dfeb"/></linearGradient><linearGradient id="gThumb" x1="0" y1="0" x2="0" y2="1"><stop offset="0" stop-color="#f2f2f2"/><stop offset="0.45" stop-color="#e6e6e6"/><stop offset="0.5" stop-color="#d6d6d6"/><stop offset="1" stop-color="#cacaca"/></linearGradient><linearGradient id="gDlgTitle" x1="0" y1="0" x2="0" y2="1"><stop offset="0" stop-color="#c0cfde"/><stop offset="1" stop-color="#d5e2ef"/></linearGradient></defs>
<g shape-rendering="crispEdges">
<rect x="0" y="0" width="2560" height="22" fill="url(#gTitle)"/>
<rect x="0" y="0" width="2560" height="1" fill="#404040"/>
</g>
<rect x="3.5" y="3.5" width="13" height="13" fill="#f4f6fa" stroke="#8a8fa8" stroke-width="1"/>
<path d="M5 7.5h11M5 11.5h11M7.5 4v12M11.5 4v12" stroke="#c8cce0" stroke-width="1"/>
<path d="M4 14 L8 9 L11 11 L16 5" stroke="#2a7de0" stroke-width="1.3" fill="none"/>
<path d="M4 10 L8 6 L11 8 L16 4" stroke="#30b030" stroke-width="1.3" fill="none"/>
<text x="26" y="15.5" font-size="12.5" fill="#3a3a3a" font-weight="normal" font-style="normal" text-anchor="start" textLength="155" lengthAdjust="spacingAndGlyphs">$EURUSD (15 Min)  11.01.2014</text>
<rect x="2441" y="3" width="15" height="15" fill="#f1f1f1" stroke="#9a9a9a" stroke-width="2"/>
<text x="2445.5" y="15" font-size="11" fill="#000" font-weight="normal" font-style="normal" text-anchor="start">L</text>
<rect x="2461.5" y="2.5" width="30" height="16" rx="2" fill="url(#gWBtn)" stroke="#72829c" stroke-width="1.2"/>
<rect x="2494.5" y="2.5" width="30" height="16" rx="2" fill="url(#gWBtn)" stroke="#72829c" stroke-width="1.2"/>
<rect x="2527.5" y="2.5" width="30" height="16" rx="2" fill="url(#gWBtn)" stroke="#72829c" stroke-width="1.2"/>
<rect x="2471.5" y="10.5" width="10" height="4" rx="1.2" fill="#e6e6e6" stroke="#454552" stroke-width="1.3"/>
<rect x="2507.5" y="5.5" width="7" height="7" rx="1" fill="#ececec" stroke="#454552" stroke-width="1.3"/><rect x="2510" y="8" width="2" height="2" fill="#454552"/>
<rect x="2503.5" y="8.5" width="7" height="7" rx="1" fill="#ececec" stroke="#454552" stroke-width="1.3"/><rect x="2505" y="11" width="4" height="2" fill="none" stroke="#454552" stroke-width="0.9"/>
<path d="M2538.5 7 L2547 14 M2547 7 L2538.5 14" stroke="#464650" stroke-width="3.8" stroke-linecap="round"/><path d="M2538.5 7 L2547 14 M2547 7 L2538.5 14" stroke="#f4f4f4" stroke-width="1.6" stroke-linecap="round"/>
<path d="M0 22 H2560 V43 Q2560 47 2556 47 H4 Q0 47 0 43 Z" fill="url(#gTool)"/>
<rect x="3" y="26" width="2" height="2" fill="#b0b0b0"/>
<rect x="3" y="30" width="2" height="2" fill="#b0b0b0"/>
<rect x="3" y="34" width="2" height="2" fill="#b0b0b0"/>
<rect x="3" y="38" width="2" height="2" fill="#b0b0b0"/>
<rect x="12" y="27" width="1" height="16" fill="#c0c0c0" shape-rendering="crispEdges"/>
<rect x="143" y="27" width="1" height="16" fill="#c0c0c0" shape-rendering="crispEdges"/>
<rect x="253" y="27" width="1" height="16" fill="#c0c0c0" shape-rendering="crispEdges"/>
<rect x="311" y="27" width="1" height="16" fill="#c0c0c0" shape-rendering="crispEdges"/>
<rect x="432" y="27" width="1" height="16" fill="#c0c0c0" shape-rendering="crispEdges"/>
<rect x="480" y="27" width="1" height="16" fill="#c0c0c0" shape-rendering="crispEdges"/>
<text x="20" y="38.5" font-size="12.5" fill="#000" font-weight="normal" font-style="normal" text-anchor="start" textLength="49" lengthAdjust="spacingAndGlyphs">$EURUSD</text>
<text x="88" y="38.5" font-size="12.5" fill="#000" font-weight="normal" font-style="normal" text-anchor="start" textLength="37" lengthAdjust="spacingAndGlyphs">15 Min</text>
<path d="M75 33 h5 l-2.5 3 z" fill="#000"/>
<path d="M131 33 h5 l-2.5 3 z" fill="#000"/>
<path d="M166 33 h5 l-2.5 3 z" fill="#000"/>
<path d="M195 33 h5 l-2.5 3 z" fill="#000"/>
<path d="M276 33 h5 l-2.5 3 z" fill="#000"/>
<text x="440" y="38" font-size="12.5" fill="#000" font-weight="normal" font-style="normal" text-anchor="start" textLength="30" lengthAdjust="spacingAndGlyphs">Trend</text>
<rect x="150" y="29" width="3.5" height="11" rx="1" fill="#40c040" stroke="#222" stroke-width="0.8"/>
<rect x="155" y="29" width="3.5" height="11" rx="1" fill="#40c040" stroke="#222" stroke-width="0.8"/>
<rect x="160" y="29" width="3.5" height="11" rx="1" fill="#e03030" stroke="#222" stroke-width="0.8"/>
<path d="M179 41 L182 34 L190 26 L192 28 L184 36 Z" fill="#f0d040" stroke="#806000" stroke-width="0.8"/>
<circle cx="214" cy="34" r="4" fill="#a0c8f0" stroke="#606060" stroke-width="1.3"/><path d="M211 37 L207 41" stroke="#404040" stroke-width="2"/><path d="M219 26 v6 M216 29 h6" stroke="#20a020" stroke-width="1.6"/>
<circle cx="237" cy="34" r="4" fill="#e0e0e0" stroke="#b0b0b0" stroke-width="1.3"/><path d="M234 37 L230 41" stroke="#b0b0b0" stroke-width="2"/><path d="M239 29 h6" stroke="#b0b0b0" stroke-width="1.6"/>
<path d="M260 27 L260 38 L263 35 L266 41 L268 40 L265 34 L269 34 Z" fill="#fff" stroke="#222" stroke-width="0.9"/>
<rect x="289.5" y="27.5" width="13" height="14" fill="#fafafa" stroke="#666" stroke-width="1"/><circle cx="295" cy="35" r="3.5" fill="#80b8f0" stroke="#555" stroke-width="1"/><path d="M292 38 L289 41" stroke="#333" stroke-width="1.6"/>
<path d="M317 27 h6 l2 2 -2 2 h-6z" fill="#60d040"/><path d="M317 35 h6 l2 2 -2 2 h-6z" fill="#e03030"/><rect x="327" y="29" width="2.5" height="13" fill="#60d040" stroke="#222" stroke-width="0.6"/><rect x="330.5" y="36" width="2.5" height="6" fill="#e03030" stroke="#222" stroke-width="0.6"/>
<rect x="340.5" y="26.5" width="15" height="15" fill="#e8e8e8" stroke="#666" stroke-width="1"/><rect x="343" y="30" width="2.5" height="9" fill="#40c040" stroke="#222" stroke-width="0.6"/><rect x="347" y="28" width="2.5" height="8" fill="#40c040" stroke="#222" stroke-width="0.6"/><rect x="351" y="31" width="2.5" height="9" fill="#e03030" stroke="#222" stroke-width="0.6"/>
<rect x="363.5" y="26.5" width="15" height="15" fill="#e8e8e8" stroke="#666" stroke-width="1"/><path d="M365 33 L368 29 L371 31 L374 28 L377 31" stroke="#30b060" fill="none"/><path d="M365 37 L368 34 L371 35 L374 33 L377 36" stroke="#e03030" fill="none"/>
<path d="M388.5 27.5 h9 l3 3 v11 h-12z" fill="#fff" stroke="#666" stroke-width="1"/><text x="390.5" y="39" font-size="11" font-weight="bold" fill="#20a020">$</text>
<rect x="410.5" y="26.5" width="13" height="15" fill="#eef2fa" stroke="#666" stroke-width="1"/><rect x="412" y="28" width="10" height="2.5" fill="#4090d0"/><rect x="412" y="32" width="2.5" height="8" fill="#a070f0"/>
<g shape-rendering="crispEdges">
<rect x="0" y="1377" width="2560" height="22" fill="#e9e9e9"/>
</g>
<path d="M10 1384 L6 1388 L10 1392 Z" fill="#444"/>
<path d="M2550 1384 L2554 1388 L2550 1392 Z" fill="#444"/>
<rect x="2353.5" y="1377.5" width="188" height="21" rx="2" fill="url(#gThumb)" stroke="#9a9a9a" stroke-width="1"/>
<rect x="2443" y="1384" width="1" height="7" fill="#555"/>
<rect x="2446" y="1384" width="1" height="7" fill="#555"/>
<rect x="2449" y="1384" width="1" height="7" fill="#555"/>
<text x="1279.5" y="1422" font-size="13.85" fill="#0a0a0a" font-weight="bold" font-style="normal" text-anchor="middle">www.forex-warez.com | andreybbrv@gmail.com | skype: andreybbrv</text>
<rect x="1697.5" y="942.5" width="437" height="200" fill="#fff" stroke="#000" stroke-width="1"/>
<text x="1731" y="980" font-size="20.5" fill="#000" font-weight="bold" font-style="italic" text-anchor="start" textLength="364" lengthAdjust="spacingAndGlyphs">www.trading-software-collection.com</text>
<text x="1750" y="1025.5" font-size="20.5" fill="#000" font-weight="bold" font-style="italic" text-anchor="start" textLength="323" lengthAdjust="spacingAndGlyphs">andreybbrv@trading-software.org</text>
<text x="1800" y="1071" font-size="20.5" fill="#000" font-weight="bold" font-style="italic" text-anchor="start" textLength="223" lengthAdjust="spacingAndGlyphs">andreybbrv@gmail.com</text>
<text x="1827" y="1117" font-size="20.5" fill="#000" font-weight="bold" font-style="italic" text-anchor="start" textLength="177" lengthAdjust="spacingAndGlyphs">skype: andreybbrv</text>
<g shape-rendering="crispEdges">
<rect x="987" y="457" width="586" height="486" fill="#4a4a4a"/>
<rect x="988" y="458" width="584" height="484" fill="#d5e2ef"/>
<rect x="988" y="458" width="584" height="24" fill="url(#gDlgTitle)"/>
<rect x="988" y="458" width="584" height="1" fill="#f2f6fb"/>
<rect x="988" y="458" width="1" height="484" fill="#f2f6fb"/>
<rect x="995" y="483" width="570" height="452" fill="#f0f0f0"/>
</g>
<text x="995" y="477.5" font-size="12" fill="#404040" font-weight="normal" font-style="normal" text-anchor="start">Indicators</text>
<rect x="1550.5" y="467.5" width="12" height="12" rx="1.5" fill="#d6e0ec" stroke="#7d8ea5" stroke-width="1"/><path d="M1553.5 470.5 L1559.5 476.5 M1559.5 470.5 L1553.5 476.5" stroke="#444" stroke-width="1.5"/>
<g shape-rendering="crispEdges">
<rect x="996" y="483" width="1" height="386" fill="#a0a0a0"/>
<rect x="996" y="868" width="570" height="1" fill="#ffffff"/>
<rect x="995" y="483" width="253" height="214" fill="#f0f0f0"/>
<rect x="995" y="483" width="252" height="1" fill="#a0a0a0"/>
<rect x="995" y="483" width="1" height="213" fill="#a0a0a0"/>
<rect x="996" y="484" width="251" height="1" fill="#696969"/>
<rect x="996" y="484" width="1" height="212" fill="#696969"/>
<rect x="997" y="485" width="250" height="211" fill="#fff"/>
<rect x="1230" y="486" width="16" height="209" fill="#f0f0f0"/>
</g>
<path d="M1234 497 h7 l-3.5 -4 z" fill="#555"/><path d="M1234 684 h7 l-3.5 4 z" fill="#555"/>
<rect x="1230.5" y="504.5" width="14" height="15" rx="1.5" fill="url(#gThumb)" stroke="#999" stroke-width="1"/>
<text x="1004" y="497.8" font-size="10.6" fill="#000" font-weight="normal" font-style="normal" text-anchor="start">MarketBalance</text>
<text x="1004" y="510.8" font-size="10.6" fill="#000" font-weight="normal" font-style="normal" text-anchor="start">OFA/EXA</text>
<text x="1004" y="523.8" font-size="10.6" fill="#000" font-weight="normal" font-style="normal" text-anchor="start">OFA/MOA</text>
<text x="1004" y="536.8" font-size="10.6" fill="#000" font-weight="normal" font-style="normal" text-anchor="start">OFA/Ninja</text>
<text x="1004" y="549.8" font-size="10.6" fill="#000" font-weight="normal" font-style="normal" text-anchor="start">OFA/SRA</text>
<text x="1004" y="562.8" font-size="10.6" fill="#000" font-weight="normal" font-style="normal" text-anchor="start">OFA/VCA</text>
<text x="1005" y="575.8" font-size="10.6" fill="#000" font-weight="normal" font-style="normal" text-anchor="start">TPO and Volume Profile Chart</text>
<text x="1005" y="588.8" font-size="10.6" fill="#000" font-weight="normal" font-style="normal" text-anchor="start">TPO and Volume Profile Chart (v4)</text>
<text x="1001" y="601.8" font-size="10.6" fill="#000" font-weight="normal" font-style="normal" text-anchor="start">_BetterProAm</text>
<text x="1001" y="614.8" font-size="10.6" fill="#000" font-weight="normal" font-style="normal" text-anchor="start">_BetterProAmPB</text>
<text x="1001" y="627.8" font-size="10.6" fill="#000" font-weight="normal" font-style="normal" text-anchor="start">_BetterProAmSM</text>
<text x="1001" y="640.8" font-size="10.6" fill="#000" font-weight="normal" font-style="normal" text-anchor="start">AcmeVolumeImpression</text>
<text x="1001" y="653.8" font-size="10.6" fill="#000" font-weight="normal" font-style="normal" text-anchor="start">ADL</text>
<text x="1001" y="666.8" font-size="10.6" fill="#000" font-weight="normal" font-style="normal" text-anchor="start">ADX</text>
<text x="1001" y="679.8" font-size="10.6" fill="#000" font-weight="normal" font-style="normal" text-anchor="start">ADXR</text>
<text x="1001" y="692.8" font-size="10.6" fill="#000" font-weight="normal" font-style="normal" text-anchor="start">APZ</text>
<g shape-rendering="crispEdges">
<rect x="997" y="702" width="252" height="121" fill="#828790"/>
<rect x="998" y="703" width="250" height="119" fill="#fff"/>
<rect x="999" y="704" width="247" height="13" fill="#3399ff"/>
</g>
<text x="1001" y="714.3" font-size="10.6" fill="#fff" font-weight="normal" font-style="normal" text-anchor="start">Flux Broadhead($EURUSD (15 Min))</text>
<text x="1001" y="727.3" font-size="10.6" fill="#000" font-weight="normal" font-style="normal" text-anchor="start">FluxFlashbackHisto(AMACD,5, 20 2-periods)</text>
<text x="1001" y="740.3" font-size="10.6" fill="#000" font-weight="normal" font-style="normal" text-anchor="start">FluxFlashbackMarkers(AMACD,5, 20 2-periods)</text>
<text x="1001" y="753.3" font-size="10.6" fill="#000" font-weight="normal" font-style="normal" text-anchor="start">FPC 4.2(20, 0,2, 7:00)</text>
<text x="1001" y="766.3" font-size="10.6" fill="#000" font-weight="normal" font-style="normal" text-anchor="start">FluxHisto(AMACD,5, 20 2-wks)</text>
<text x="1001" y="779.3" font-size="10.6" fill="#000" font-weight="normal" font-style="normal" text-anchor="start">Flux Reverse Radar v2.3($EURUSD (15 Min),3)</text>
<text x="1001" y="792.3" font-size="10.6" fill="#000" font-weight="normal" font-style="normal" text-anchor="start">FluxTCM(AMACD,5, 20 2-weeks)</text>
<text x="1001" y="805.3" font-size="10.6" fill="#000" font-weight="normal" font-style="normal" text-anchor="start">Flux Trend Stalker Elite($EURUSD (15 Min),True)</text>
<rect x="1020.5" y="839.5" width="65" height="22" rx="2" fill="#f4f4f4" stroke="#adb2b5" stroke-width="1"/>
<text x="1053" y="854.5" font-size="11" fill="#a0a0a0" font-weight="normal" font-style="normal" text-anchor="middle">New</text>
<rect x="1157.5" y="839.5" width="65" height="22" rx="2" fill="url(#gBtn)" stroke="#707070" stroke-width="1"/>
<text x="1190" y="854.5" font-size="11" fill="#000" font-weight="normal" font-style="normal" text-anchor="middle">Remove</text>
<rect x="1084.5" y="899.5" width="78" height="22" rx="2" fill="url(#gBtn)" stroke="#3c7fb1" stroke-width="1.6"/>
<text x="1123.5" y="914.5" font-size="11" fill="#000" font-weight="normal" font-style="normal" text-anchor="middle">OK</text>
<rect x="1241.5" y="899.5" width="77" height="22" rx="2" fill="url(#gBtn)" stroke="#707070" stroke-width="1"/>
<text x="1280" y="914.5" font-size="11" fill="#000" font-weight="normal" font-style="normal" text-anchor="middle">Apply</text>
<rect x="1398.5" y="899.5" width="77" height="22" rx="2" fill="url(#gBtn)" stroke="#707070" stroke-width="1"/>
<text x="1437" y="914.5" font-size="11" fill="#000" font-weight="normal" font-style="normal" text-anchor="middle">Close</text>
<g shape-rendering="crispEdges">
<rect x="1304" y="484" width="260" height="323" fill="#828790"/>
<rect x="1305" y="485" width="258" height="321" fill="#fff"/>
<rect x="1305" y="485" width="241" height="321" fill="#c8c8c8"/>
</g>
<rect x="1307.5" y="489.5" width="9" height="9" fill="#fff" stroke="#222" stroke-width="1"/>
<rect x="1309" y="493" width="6" height="2" fill="#000" shape-rendering="crispEdges"/>
<text x="1322" y="498.5" font-size="11" fill="#000" font-weight="bold" font-style="normal" text-anchor="start">Data</text>
<g shape-rendering="crispEdges">
<rect x="1319" y="502" width="106" height="15" fill="#fff"/>
<rect x="1426" y="502" width="119" height="15" fill="#fff"/>
</g>
<text x="1322" y="514.5" font-size="10.8" fill="#000" font-weight="normal" font-style="normal" text-anchor="start">Calculate on bar close</text>
<g shape-rendering="crispEdges">
<rect x="1426" y="502" width="119" height="15" fill="#fff"/>
</g>
<text x="1430" y="514.5" font-size="11" fill="#000" font-weight="bold" font-style="normal" text-anchor="start">True</text>
<g shape-rendering="crispEdges">
<rect x="1319" y="518" width="106" height="15" fill="#fff"/>
<rect x="1426" y="518" width="119" height="15" fill="#fff"/>
</g>
<text x="1322" y="530.5" font-size="10.8" fill="#000" font-weight="normal" font-style="normal" text-anchor="start">Input series</text>
<g shape-rendering="crispEdges">
<rect x="1426" y="518" width="119" height="15" fill="#fff"/>
</g>
<text x="1430" y="530.5" font-size="11" fill="#000" font-weight="bold" font-style="normal" text-anchor="start">$EURUSD (15 Min)</text>
<g shape-rendering="crispEdges">
<rect x="1319" y="534" width="106" height="15" fill="#fff"/>
<rect x="1426" y="534" width="119" height="15" fill="#fff"/>
</g>
<text x="1322" y="546.5" font-size="10.8" fill="#000" font-weight="normal" font-style="normal" text-anchor="start">Maximum bars look back</text>
<g shape-rendering="crispEdges">
<rect x="1426" y="534" width="119" height="15" fill="#fff"/>
</g>
<text x="1430" y="546.5" font-size="11" fill="#000" font-weight="bold" font-style="normal" text-anchor="start">TwoHundredFiftySix</text>
<rect x="1307.5" y="553.5" width="9" height="9" fill="#fff" stroke="#222" stroke-width="1"/>
<rect x="1309" y="557" width="6" height="2" fill="#000" shape-rendering="crispEdges"/>
<text x="1322" y="562.5" font-size="11" fill="#000" font-weight="bold" font-style="normal" text-anchor="start">Visual</text>
<g shape-rendering="crispEdges">
<rect x="1319" y="566" width="106" height="15" fill="#fff"/>
<rect x="1426" y="566" width="119" height="15" fill="#fff"/>
</g>
<text x="1322" y="578.5" font-size="10.8" fill="#000" font-weight="normal" font-style="normal" text-anchor="start">Auto scale</text>
<g shape-rendering="crispEdges">
<rect x="1426" y="566" width="119" height="15" fill="#fff"/>
</g>
<text x="1430" y="578.5" font-size="11" fill="#000" font-weight="bold" font-style="normal" text-anchor="start">False</text>
<g shape-rendering="crispEdges">
<rect x="1319" y="582" width="106" height="15" fill="#fff"/>
<rect x="1426" y="582" width="119" height="15" fill="#fff"/>
</g>
<text x="1322" y="594.5" font-size="10.8" fill="#000" font-weight="normal" font-style="normal" text-anchor="start">Displacement</text>
<g shape-rendering="crispEdges">
<rect x="1426" y="582" width="119" height="15" fill="#fff"/>
</g>
<text x="1430" y="594.5" font-size="11" fill="#000" font-weight="bold" font-style="normal" text-anchor="start">0</text>
<g shape-rendering="crispEdges">
<rect x="1319" y="598" width="106" height="15" fill="#fff"/>
<rect x="1426" y="598" width="119" height="15" fill="#fff"/>
</g>
<text x="1322" y="610.5" font-size="10.8" fill="#000" font-weight="normal" font-style="normal" text-anchor="start">Display in Data Box</text>
<g shape-rendering="crispEdges">
<rect x="1426" y="598" width="119" height="15" fill="#fff"/>
</g>
<text x="1430" y="610.5" font-size="11" fill="#000" font-weight="bold" font-style="normal" text-anchor="start">True</text>
<g shape-rendering="crispEdges">
<rect x="1426" y="614" width="119" height="15" fill="#fff"/>
</g>
<text x="1322" y="626.5" font-size="10.8" fill="#000" font-weight="normal" font-style="normal" text-anchor="start">Label</text>
<g shape-rendering="crispEdges">
<rect x="1426" y="614" width="119" height="15" fill="#fff"/>
</g>
<text x="1430" y="626.5" font-size="11" fill="#000" font-weight="bold" font-style="normal" text-anchor="start">Flux Broadhead</text>
<g shape-rendering="crispEdges">
<rect x="1319" y="630" width="106" height="15" fill="#fff"/>
<rect x="1426" y="630" width="119" height="15" fill="#fff"/>
</g>
<text x="1322" y="642.5" font-size="10.8" fill="#000" font-weight="normal" font-style="normal" text-anchor="start">Panel</text>
<g shape-rendering="crispEdges">
<rect x="1426" y="630" width="119" height="15" fill="#fff"/>
</g>
<text x="1430" y="642.5" font-size="11" fill="#000" font-weight="bold" font-style="normal" text-anchor="start">Same as input series</text>
<g shape-rendering="crispEdges">
<rect x="1319" y="646" width="106" height="15" fill="#fff"/>
<rect x="1426" y="646" width="119" height="15" fill="#fff"/>
</g>
<text x="1322" y="658.5" font-size="10.8" fill="#000" font-weight="normal" font-style="normal" text-anchor="start">Price marker(s)</text>
<g shape-rendering="crispEdges">
<rect x="1426" y="646" width="119" height="15" fill="#fff"/>
</g>
<text x="1430" y="658.5" font-size="11" fill="#000" font-weight="bold" font-style="normal" text-anchor="start">True</text>
<g shape-rendering="crispEdges">
<rect x="1319" y="662" width="106" height="15" fill="#fff"/>
<rect x="1426" y="662" width="119" height="15" fill="#fff"/>
</g>
<text x="1322" y="674.5" font-size="10.8" fill="#000" font-weight="normal" font-style="normal" text-anchor="start">Scale justification</text>
<g shape-rendering="crispEdges">
<rect x="1426" y="662" width="119" height="15" fill="#fff"/>
</g>
<text x="1430" y="674.5" font-size="11" fill="#000" font-weight="bold" font-style="normal" text-anchor="start">Right</text>
<rect x="1307.5" y="681.5" width="9" height="9" fill="#fff" stroke="#222" stroke-width="1"/>
<rect x="1309" y="685" width="6" height="2" fill="#000" shape-rendering="crispEdges"/>
<text x="1322" y="690.5" font-size="11" fill="#000" font-weight="bold" font-style="normal" text-anchor="start">Lines</text>
<g shape-rendering="crispEdges">
<rect x="1319" y="694" width="106" height="15" fill="#fff"/>
<rect x="1426" y="694" width="119" height="15" fill="#fff"/>
</g>
<text x="1322" y="706.5" font-size="10.8" fill="#000" font-weight="normal" font-style="normal" text-anchor="start">Mid</text>
<g shape-rendering="crispEdges">
<rect x="1426" y="694" width="119" height="15" fill="#fff"/>
</g>
<rect x="1307.5" y="697.5" width="9" height="9" fill="#fff" stroke="#222" stroke-width="1"/>
<rect x="1309" y="701" width="6" height="2" fill="#000" shape-rendering="crispEdges"/>
<rect x="1311" y="699" width="2" height="6" fill="#000" shape-rendering="crispEdges"/>
<rect x="1427.5" y="695.5" width="19" height="12" fill="#fff" stroke="#000" stroke-width="1.4"/>
<rect x="1428" y="701" width="18" height="2" fill="#000" shape-rendering="crispEdges"/>
<text x="1455" y="706.5" font-size="11" fill="#000" font-weight="bold" font-style="normal" text-anchor="start">0</text>
<g shape-rendering="crispEdges">
<rect x="1319" y="710" width="106" height="15" fill="#fff"/>
<rect x="1426" y="710" width="119" height="15" fill="#fff"/>
</g>
<text x="1322" y="722.5" font-size="10.8" fill="#000" font-weight="normal" font-style="normal" text-anchor="start">OB</text>
<g shape-rendering="crispEdges">
<rect x="1426" y="710" width="119" height="15" fill="#fff"/>
</g>
<rect x="1307.5" y="713.5" width="9" height="9" fill="#fff" stroke="#222" stroke-width="1"/>
<rect x="1309" y="717" width="6" height="2" fill="#000" shape-rendering="crispEdges"/>
<rect x="1311" y="715" width="2" height="6" fill="#000" shape-rendering="crispEdges"/>
<rect x="1427.5" y="711.5" width="19" height="12" fill="#fff" stroke="#000" stroke-width="1.4"/>
<rect x="1428" y="717" width="18" height="2" fill="#000" shape-rendering="crispEdges"/>
<text x="1455" y="722.5" font-size="11" fill="#000" font-weight="bold" font-style="normal" text-anchor="start">91</text>
<g shape-rendering="crispEdges">
<rect x="1319" y="726" width="106" height="15" fill="#fff"/>
<rect x="1426" y="726" width="119" height="15" fill="#fff"/>
</g>
<text x="1322" y="738.5" font-size="10.8" fill="#000" font-weight="normal" font-style="normal" text-anchor="start">OS</text>
<g shape-rendering="crispEdges">
<rect x="1426" y="726" width="119" height="15" fill="#fff"/>
</g>
<rect x="1307.5" y="729.5" width="9" height="9" fill="#fff" stroke="#222" stroke-width="1"/>
<rect x="1309" y="733" width="6" height="2" fill="#000" shape-rendering="crispEdges"/>
<rect x="1311" y="731" width="2" height="6" fill="#000" shape-rendering="crispEdges"/>
<rect x="1427.5" y="727.5" width="19" height="12" fill="#fff" stroke="#000" stroke-width="1.4"/>
<rect x="1428" y="733" width="18" height="2" fill="#000" shape-rendering="crispEdges"/>
<text x="1455" y="738.5" font-size="11" fill="#000" font-weight="bold" font-style="normal" text-anchor="start">-91</text>
<rect x="1307.5" y="745.5" width="9" height="9" fill="#fff" stroke="#222" stroke-width="1"/>
<rect x="1309" y="749" width="6" height="2" fill="#000" shape-rendering="crispEdges"/>
<text x="1322" y="754.5" font-size="11" fill="#000" font-weight="bold" font-style="normal" text-anchor="start">Plots</text>
<g shape-rendering="crispEdges">
<rect x="1319" y="758" width="106" height="15" fill="#fff"/>
<rect x="1426" y="758" width="119" height="15" fill="#fff"/>
</g>
<text x="1322" y="770.5" font-size="10.8" fill="#000" font-weight="normal" font-style="normal" text-anchor="start">DI</text>
<g shape-rendering="crispEdges">
<rect x="1426" y="758" width="119" height="15" fill="#fff"/>
</g>
<rect x="1307.5" y="761.5" width="9" height="9" fill="#fff" stroke="#222" stroke-width="1"/>
<rect x="1309" y="765" width="6" height="2" fill="#000" shape-rendering="crispEdges"/>
<rect x="1311" y="763" width="2" height="6" fill="#000" shape-rendering="crispEdges"/>
<rect x="1427.5" y="759.5" width="19" height="12" fill="#fff" stroke="#000" stroke-width="1.4"/>
<path d="M1429 770 L1434 764 L1439 767 L1446 761" stroke="#000" stroke-width="1.6" fill="none"/>
<text x="1455" y="770.5" font-size="11" fill="#000" font-weight="bold" font-style="normal" text-anchor="start">Line; Solid; 1px</text>
<g shape-rendering="crispEdges">
<rect x="1319" y="774" width="106" height="15" fill="#fff"/>
<rect x="1426" y="774" width="119" height="15" fill="#fff"/>
</g>
<text x="1322" y="786.5" font-size="10.8" fill="#000" font-weight="normal" font-style="normal" text-anchor="start">FluxBroadhead</text>
<g shape-rendering="crispEdges">
<rect x="1426" y="774" width="119" height="15" fill="#fff"/>
</g>
<rect x="1307.5" y="777.5" width="9" height="9" fill="#fff" stroke="#222" stroke-width="1"/>
<rect x="1309" y="781" width="6" height="2" fill="#000" shape-rendering="crispEdges"/>
<rect x="1311" y="779" width="2" height="6" fill="#000" shape-rendering="crispEdges"/>
<rect x="1427.5" y="775.5" width="19" height="12" fill="#fff" stroke="#000" stroke-width="1.4"/>
<path d="M1432.5 787 v-5 M1437.5 787 v-3 M1442.5 787 v-8" stroke="#e00000" stroke-width="1.6"/>
<text x="1455" y="786.5" font-size="11" fill="#000" font-weight="bold" font-style="normal" text-anchor="start">Bar; Solid; 1px</text>
<g shape-rendering="crispEdges">
<rect x="1319" y="790" width="106" height="15" fill="#fff"/>
<rect x="1426" y="790" width="119" height="15" fill="#fff"/>
</g>
<text x="1322" y="802.5" font-size="10.8" fill="#000" font-weight="normal" font-style="normal" text-anchor="start">FluxBroadhead</text>
<g shape-rendering="crispEdges">
<rect x="1426" y="790" width="119" height="15" fill="#fff"/>
</g>
<rect x="1307.5" y="793.5" width="9" height="9" fill="#fff" stroke="#222" stroke-width="1"/>
<rect x="1309" y="797" width="6" height="2" fill="#000" shape-rendering="crispEdges"/>
<rect x="1311" y="795" width="2" height="6" fill="#000" shape-rendering="crispEdges"/>
<rect x="1427.5" y="791.5" width="19" height="12" fill="#fff" stroke="#000" stroke-width="1.4"/>
<path d="M1432.5 803 v-5 M1437.5 803 v-3 M1442.5 803 v-8" stroke="#008000" stroke-width="1.6"/>
<text x="1455" y="802.5" font-size="11" fill="#000" font-weight="bold" font-style="normal" text-anchor="start">Bar; Solid; 1px</text>
<g shape-rendering="crispEdges">
<rect x="1546" y="485" width="17" height="321" fill="#f0f0f0"/>
</g>
<path d="M1550 498 h7 l-3.5 -4 z" fill="#555"/><path d="M1550 795 h7 l-3.5 4 z" fill="#555"/>
<rect x="1547.5" y="505.5" width="14" height="177" rx="1.5" fill="#e8e8e8" stroke="#9a9a9a" stroke-width="1"/>
<rect x="1550" y="589" width="8" height="1" fill="#666" shape-rendering="crispEdges"/>
<rect x="1550" y="592" width="8" height="1" fill="#666" shape-rendering="crispEdges"/>
<rect x="1550" y="595" width="8" height="1" fill="#666" shape-rendering="crispEdges"/>
<rect x="1304.5" y="809.5" width="258" height="58" fill="#f0f0f0" stroke="#a0a0a0" stroke-width="1"/>
<text x="1310" y="823" font-size="11" fill="#000" font-weight="bold" font-style="normal" text-anchor="start">Label</text>
<rect x="1559" y="926" width="2" height="2" fill="#b0b8c4" shape-rendering="crispEdges"/>
<rect x="1556" y="929" width="2" height="2" fill="#b0b8c4" shape-rendering="crispEdges"/>
<rect x="1559" y="929" width="2" height="2" fill="#b0b8c4" shape-rendering="crispEdges"/>
<rect x="1553" y="932" width="2" height="2" fill="#b0b8c4" shape-rendering="crispEdges"/>
<rect x="1556" y="932" width="2" height="2" fill="#b0b8c4" shape-rendering="crispEdges"/>
<rect x="1559" y="932" width="2" height="2" fill="#b0b8c4" shape-rendering="crispEdges"/>
</svg></body></html>
